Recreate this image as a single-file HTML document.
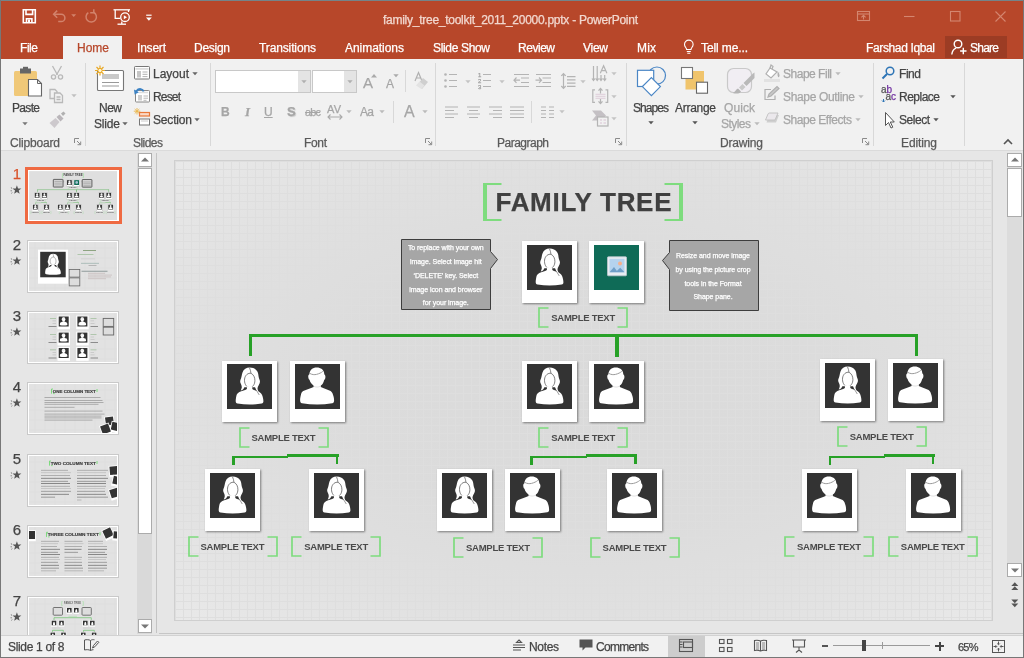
<!DOCTYPE html>
<html lang="en"><head><meta charset="utf-8"><title>family_tree_toolkit_2011_20000.pptx - PowerPoint</title>
<style>
html,body{margin:0;padding:0;}
body{width:1024px;height:658px;overflow:hidden;background:#e6e6e6;font-family:"Liberation Sans",sans-serif;}
#app{will-change:transform;position:relative;width:1024px;height:658px;overflow:hidden;background:#e6e6e6;}
.a{position:absolute;}
.t{-webkit-text-stroke:0.250px currentColor;position:absolute;white-space:nowrap;line-height:20px;height:20px;}
svg{position:absolute;overflow:visible;}
#slide{background-color:#e0e0e0;background-image:linear-gradient(to right,#dedede 1px,transparent 1px),linear-gradient(to bottom,#dedede 1px,transparent 1px),radial-gradient(ellipse farthest-corner at 50% 50%,#dadada 0%,#dcdcdc 42%,#e0e0e0 68%,#e6e6e6 90%,#e9e9e9 100%);background-size:8px 8px,8px 8px,100% 100%;background-position:0 0,0 0,0 0;box-shadow:0 0 0 1px #cfcfcf;}
.fr{width:55px;height:61.500px;background:#fff;box-shadow:0.500px 0.500px 2px rgba(0,0,0,.45);}
.slidebg{background-color:#dfdfdf;background-image:linear-gradient(to right,#d3d3d3 1.500px,transparent 1.500px),linear-gradient(to bottom,#d3d3d3 1.500px,transparent 1.500px);background-size:80px 80px;background-position:40px 30px;}
.th{width:92px;height:53px;box-sizing:border-box;border:1px solid #c9c9c9;background:#fff;}

</style></head>
<body>
<div id="app">
<div class="a" style="left:0;top:0;width:1024px;height:59px;background:#b7472a"></div>
<svg style="left:21px;top:8px" width="140" height="18" viewBox="0 0 140 18">
<g fill="none" stroke="#fff" stroke-width="1.6">
<path d="M2.3 1.8h12v13h-12z"/><path d="M5 1.8v4.6h6.6V1.8"/><path d="M5.5 14.8v-4h5.4v4"/>
</g>
<rect x="7" y="11.5" width="2" height="3" fill="#fff"/>
<g fill="none" stroke="#d2826b" stroke-width="1.5">
<path d="M33 6.2h7.2a3.7 3.7 0 0 1 0 7.4h-3"/><path d="M36.2 2.6L32.6 6.2l3.6 3.6"/>
<path d="M72.5 4.2a5.2 5.2 0 1 1-5.2 0.4"/><path d="M72.8 1.2v3.6h-3.6"/>
</g>
<path d="M50.2 6.2h5l-2.5 2.8z" fill="#d2826b"/>
<g fill="none" stroke="#fff" stroke-width="1.3">
<path d="M92.5 1.8h16.5"/><path d="M94.2 2v8.4h5"/><path d="M107.5 2v2"/>
<circle cx="104" cy="9.2" r="4.3"/><path d="M96.5 16.2h8.5"/><path d="M100.8 13.5v2.6"/>
</g>
<path d="M102.8 7.2l3.2 2l-3.2 2z" fill="#fff"/>
<path d="M125.2 7.2h5.4" stroke="#fff" stroke-width="1.2"/><path d="M125 9.6h5.8l-2.9 3.2z" fill="#fff"/>
</svg>
<span class="t " style="left:383px;top:10px;font-size:12px;color:#f2d8cf;letter-spacing:-0.262px;">family_tree_toolkit_2011_20000.pptx - PowerPoint</span>
<svg style="left:855px;top:8px" width="160" height="18" viewBox="0 0 160 18" fill="none" stroke="#d4866f" stroke-width="1.1">
<rect x="2.5" y="3.5" width="12" height="9"/><path d="M2.5 6h12"/><path d="M8.5 11.5v-4M6.4 9.4l2.1-2.1l2.1 2.1"/>
<path d="M49 8.5h10.5"/>
<rect x="95.500" y="3.500" width="9.500" height="9.500"/>
<path d="M140.500 3.500l10 10M150.500 3.500l-10 10"/>
</svg>
<div class="a" style="left:63px;top:36px;width:59px;height:24px;background:#f1f1f1"></div>
<div class="a" style="left:945px;top:36px;width:62px;height:22px;background:#9c3c24"></div>
<span class="t " style="left:20px;top:38px;font-size:12px;color:#fff;letter-spacing:-0.446px;">File</span>
<span class="t " style="left:137px;top:38px;font-size:12px;color:#fff;letter-spacing:-0.203px;">Insert</span>
<span class="t " style="left:194px;top:38px;font-size:12px;color:#fff;letter-spacing:-0.271px;">Design</span>
<span class="t " style="left:259px;top:38px;font-size:12px;color:#fff;letter-spacing:-0.125px;">Transitions</span>
<span class="t " style="left:345px;top:38px;font-size:12px;color:#fff;letter-spacing:-0.040px;">Animations</span>
<span class="t " style="left:433px;top:38px;font-size:12px;color:#fff;letter-spacing:-0.338px;">Slide Show</span>
<span class="t " style="left:518px;top:38px;font-size:12px;color:#fff;letter-spacing:-0.470px;">Review</span>
<span class="t " style="left:583px;top:38px;font-size:12px;color:#fff;letter-spacing:-0.265px;">View</span>
<span class="t " style="left:637px;top:38px;font-size:12px;color:#fff;letter-spacing:0.169px;">Mix</span>
<span class="t " style="left:701px;top:38px;font-size:12px;color:#fff;letter-spacing:-0.113px;">Tell me...</span>
<span class="t " style="left:866px;top:38px;font-size:12px;color:#fff;letter-spacing:-0.365px;">Farshad Iqbal</span>
<span class="t " style="left:970px;top:38px;font-size:12px;color:#fff;letter-spacing:-0.756px;">Share</span>
<span class="t " style="left:77px;top:38px;font-size:12px;color:#b7472a;letter-spacing:-0.004px;">Home</span>
<svg style="left:682px;top:38px" width="14" height="18" viewBox="0 0 14 18" fill="none" stroke="#fff" stroke-width="1.1">
<path d="M4.600 11.500c0-1.600-2.100-2.600-2.100-5.100a4.300 4.300 0 0 1 8.600 0c0 2.500-2.100 3.500-2.100 5.100z"/><path d="M4.800 13.500h4M5.300 15.300h3"/></svg>
<svg style="left:950px;top:38px" width="20" height="18" viewBox="0 0 20 18" fill="none" stroke="#fff" stroke-width="1.4">
<circle cx="8" cy="6" r="3.800"/><path d="M1.800 16.500c0.400-3.600 2.300-5.600 4.300-6.300"/><path d="M13.300 9.800v6.400M10.100 13h6.400"/></svg>
<div class="a" style="left:0;top:59px;width:1024px;height:91px;background:#f1f1f1"></div>
<div class="a" style="left:0;top:150px;width:1024px;height:1px;background:#dadada"></div>
<div class="a" style="left:85px;top:63px;width:1px;height:83px;background:#d8d8d8"></div>
<div class="a" style="left:210px;top:63px;width:1px;height:83px;background:#d8d8d8"></div>
<div class="a" style="left:435px;top:63px;width:1px;height:83px;background:#d8d8d8"></div>
<div class="a" style="left:626px;top:63px;width:1px;height:83px;background:#d8d8d8"></div>
<div class="a" style="left:873px;top:63px;width:1px;height:83px;background:#d8d8d8"></div>
<div class="a" style="left:964px;top:63px;width:1px;height:83px;background:#d8d8d8"></div>
<span class="t " style="left:10px;top:133px;font-size:12px;color:#5a5a5a;letter-spacing:-0.171px;">Clipboard</span>
<span class="t " style="left:133px;top:133px;font-size:12px;color:#5a5a5a;letter-spacing:-0.537px;">Slides</span>
<span class="t " style="left:304px;top:133px;font-size:12px;color:#5a5a5a;letter-spacing:-0.338px;">Font</span>
<span class="t " style="left:497px;top:133px;font-size:12px;color:#5a5a5a;letter-spacing:-0.505px;">Paragraph</span>
<span class="t " style="left:720px;top:133px;font-size:12px;color:#5a5a5a;letter-spacing:-0.170px;">Drawing</span>
<span class="t " style="left:901px;top:133px;font-size:12px;color:#5a5a5a;letter-spacing:-0.116px;">Editing</span>
<svg style="left:74px;top:138px" width="8" height="8" viewBox="0 0 8 8" fill="none" stroke="#8a8a8a" stroke-width="1"><path d="M0.500 5V0.500H5"/><path d="M3 3l3.500 3.500M6.700 3.500v3.200H3.500"/></svg>
<svg style="left:425px;top:138px" width="8" height="8" viewBox="0 0 8 8" fill="none" stroke="#8a8a8a" stroke-width="1"><path d="M0.500 5V0.500H5"/><path d="M3 3l3.500 3.500M6.700 3.500v3.200H3.500"/></svg>
<svg style="left:615px;top:138px" width="8" height="8" viewBox="0 0 8 8" fill="none" stroke="#8a8a8a" stroke-width="1"><path d="M0.500 5V0.500H5"/><path d="M3 3l3.500 3.500M6.700 3.500v3.200H3.500"/></svg>
<svg style="left:862px;top:138px" width="8" height="8" viewBox="0 0 8 8" fill="none" stroke="#8a8a8a" stroke-width="1"><path d="M0.500 5V0.500H5"/><path d="M3 3l3.500 3.500M6.700 3.500v3.200H3.500"/></svg>
<svg style="left:1003px;top:138px" width="10" height="8" viewBox="0 0 10 8" fill="none" stroke="#555" stroke-width="1.6"><path d="M1 6l4-4l4 4"/></svg>
<svg style="left:12px;top:66px" width="66" height="60" viewBox="0 0 66 60">
<rect x="2" y="5" width="23" height="25" rx="1.500" fill="#f0c878"/>
<rect x="8" y="2.500" width="11" height="5" fill="#666"/><rect x="11" y="0.800" width="5" height="3" fill="#666"/>
<path d="M16.500 13.500h9l4 4v12.500h-13z" fill="#fff" stroke="#666" stroke-width="1.100"/><path d="M25.500 13.500v4h4" fill="none" stroke="#666" stroke-width="1"/>
<g fill="none" stroke="#b9b9b9" stroke-width="1.300">
<path d="M40.500 0l5 9M49.500 0l-5 9"/><circle cx="41.500" cy="11" r="2.100"/><circle cx="48.500" cy="11" r="2.100"/>
<path d="M38 23.500h5l2 2v7h-7z"/><path d="M42.500 27h5.500l2.500 2.500v7h-8z" fill="#f1f1f1"/><path d="M44.500 31h4M44.500 33.500h4"/>
</g>
<g transform="translate(-1 5)"><path d="M38.500 52l6-5l4 4l-5 6z" fill="#cdc9cd"/><path d="M45.500 46l3-2.500l4 4l-3 3z" fill="#b9b5b9"/><path d="M50 42.500l2.500-2l2 2l-2.500 2.500z" fill="#b0b0b0"/></g>
</svg>
<svg style="left:71px;top:94px" width="6" height="4" viewBox="0 0 6 4"><path d="M0.300 0.300h5.400L3 3.200z" fill="#c0c0c0"/></svg>
<span class="t " style="left:12px;top:98px;font-size:12px;color:#444;letter-spacing:-0.672px;">Paste</span>
<svg style="left:22px;top:122px" width="6" height="4" viewBox="0 0 6 4"><path d="M0.300 0.300h5.400L3 3.200z" fill="#777"/></svg>
<svg style="left:94px;top:65px" width="34" height="30" viewBox="0 0 34 30">
<rect x="3.500" y="5.500" width="26" height="20" rx="1" fill="#fff" stroke="#777" stroke-width="1.100"/>
<rect x="8" y="9" width="17" height="5" fill="#c9c9c9"/><path d="M8 17.500h17M8 21h17" stroke="#999" stroke-width="1"/>
<g stroke="#e9a825" stroke-width="1.200"><path d="M6 0.500v10M1 5.500h10M2.500 2l7 7M9.500 2l-7 7"/></g><circle cx="6" cy="5.500" r="2.100" fill="#fff6d8" stroke="#e9a825" stroke-width="1"/>
</svg>
<span class="t " style="left:99px;top:98px;font-size:12px;color:#444;letter-spacing:-0.504px;">New</span>
<span class="t " style="left:94px;top:114px;font-size:12px;color:#444;letter-spacing:-0.171px;">Slide</span>
<svg style="left:122px;top:122px" width="6" height="4" viewBox="0 0 6 4"><path d="M0.300 0.300h5.400L3 3.200z" fill="#666"/></svg>
<svg style="left:134px;top:65px" width="18" height="62" viewBox="0 0 18 62">
<rect x="0.500" y="1.500" width="15" height="12.500" rx="0.800" fill="#fff" stroke="#777" stroke-width="1"/><rect x="1.500" y="3" width="13" height="1.800" fill="#dcdcdc"/><rect x="3" y="6" width="4" height="6.500" fill="#c6c6c6"/><path d="M8.500 7h5M8.500 9.300h5M8.500 11.600h5" stroke="#a8a8a8" stroke-width="0.900"/>
<rect x="1.500" y="25.500" width="14" height="11.500" rx="0.800" fill="#fff" stroke="#888" stroke-width="1"/><rect x="4" y="30" width="4" height="5.500" fill="#cfcfcf"/><path d="M9.500 31h4.500M9.500 33.200h4.500M9.500 35.300h3" stroke="#b0b0b0" stroke-width="0.900"/><path d="M5 27.500h9" stroke="#ddd" stroke-width="1.500"/>
<path d="M9.500 26.500c-0.500-2.500-4.500-3.800-7-0.500" fill="none" stroke="#3b82c4" stroke-width="1.800"/><path d="M0 24.500l0.600 5l4.400-2.200z" fill="#3b82c4"/>
<rect x="5.500" y="47.500" width="10" height="3.500" fill="#fbd9c6" stroke="#e8793a" stroke-width="1.200"/><rect x="5.500" y="54" width="10" height="6" fill="#fff" stroke="#777" stroke-width="1"/><path d="M7 56h7" stroke="#ccc" stroke-width="1"/>
<g stroke="#eab54a" stroke-width="0.900"><path d="M3 43v6.500M-0.200 46.200h6.500M0.700 44l4.600 4.600M5.300 44l-4.600 4.600"/></g>
</svg>
<span class="t " style="left:153px;top:64px;font-size:12px;color:#444;letter-spacing:-0.006px;">Layout</span>
<svg style="left:192px;top:72px" width="6" height="4" viewBox="0 0 6 4"><path d="M0.300 0.300h5.400L3 3.200z" fill="#666"/></svg>
<span class="t " style="left:153px;top:87px;font-size:12px;color:#444;letter-spacing:-0.837px;">Reset</span>
<span class="t " style="left:153px;top:110px;font-size:12px;color:#444;letter-spacing:-0.171px;">Section</span>
<svg style="left:194px;top:118px" width="6" height="4" viewBox="0 0 6 4"><path d="M0.300 0.300h5.400L3 3.200z" fill="#666"/></svg>
<div class="a" style="left:215px;top:70px;width:96px;height:23px;background:#fff;border:1px solid #c8c8c8;box-sizing:border-box"></div>
<div class="a" style="left:298px;top:71px;width:12px;height:21px;background:#e4e4e4"></div>
<div class="a" style="left:312px;top:70px;width:45px;height:23px;background:#fff;border:1px solid #c8c8c8;box-sizing:border-box"></div>
<div class="a" style="left:344px;top:71px;width:12px;height:21px;background:#e4e4e4"></div>
<svg style="left:301px;top:80px" width="6" height="4" viewBox="0 0 6 4"><path d="M0.300 0.300h5.400L3 3.200z" fill="#b0b0b0"/></svg>
<svg style="left:347px;top:80px" width="6" height="4" viewBox="0 0 6 4"><path d="M0.300 0.300h5.400L3 3.200z" fill="#b0b0b0"/></svg>
<span class="t " style="left:363px;top:73px;font-size:15px;color:#a6a6a6;">A</span>
<svg style="left:371px;top:74px" width="6" height="4" viewBox="0 0 6 4"><path d="M0 3.500h6L3 0z" fill="#aaa"/></svg>
<span class="t " style="left:386px;top:74px;font-size:12px;color:#a6a6a6;">A</span>
<svg style="left:393px;top:74px" width="6" height="4" viewBox="0 0 6 4"><path d="M0.300 0.300h5.400L3 3.200z" fill="#aaa"/></svg>
<div class="a" style="left:405px;top:70px;width:1px;height:22px;background:#d8d8d8"></div>
<svg style="left:414px;top:72px" width="16" height="18" viewBox="0 0 16 18"><path d="M1 9L4.500 0.500L8 9M2.300 6h4.400" fill="none" stroke="#b0b0b0" stroke-width="1.200"/><path d="M3 13l6-7l5 4l-6 7z" fill="#cfcfcf"/><path d="M2 13.500l3.500-4l5 4l-3 3.500z" fill="#e3e3e3"/></svg>
<span class="t " style="left:221px;top:102px;font-size:12px;color:#a6a6a6;font-weight:bold;">B</span>
<span class="t " style="left:245px;top:102px;font-size:12px;color:#a6a6a6;font-weight:bold;font-style:italic;font-family:'Liberation Serif',serif;font-size:13px;">I</span>
<span class="t " style="left:264px;top:102px;font-size:12px;color:#a6a6a6;text-decoration:underline;">U</span>
<span class="t " style="left:287px;top:102px;font-size:13px;color:#a6a6a6;font-weight:bold;text-shadow:1px 1px 1px #ccc;">S</span>
<span class="t " style="left:305px;top:102px;font-size:11px;color:#a6a6a6;letter-spacing:-0.868px;text-decoration:line-through;">abc</span>
<span class="t " style="left:327px;top:99px;font-size:11px;color:#a6a6a6;letter-spacing:0.143px;">AV</span>
<svg style="left:327px;top:114px" width="16" height="6" viewBox="0 0 16 6" fill="none" stroke="#aaa" stroke-width="1.100"><path d="M1 3h14M3.500 0.500L1 3l2.500 2.500M12.500 0.500L15 3l-2.500 2.500"/></svg>
<svg style="left:346px;top:110px" width="6" height="4" viewBox="0 0 6 4"><path d="M0.300 0.300h5.400L3 3.200z" fill="#bbb"/></svg>
<span class="t " style="left:360px;top:102px;font-size:12px;color:#a6a6a6;letter-spacing:-0.678px;">Aa</span>
<svg style="left:379px;top:110px" width="6" height="4" viewBox="0 0 6 4"><path d="M0.300 0.300h5.400L3 3.200z" fill="#bbb"/></svg>
<div class="a" style="left:393px;top:101px;width:1px;height:22px;background:#d8d8d8"></div>
<span class="t " style="left:404px;top:102px;font-size:16px;color:#a6a6a6;">A</span>
<svg style="left:422px;top:110px" width="6" height="4" viewBox="0 0 6 4"><path d="M0.300 0.300h5.400L3 3.200z" fill="#bbb"/></svg>
<svg style="left:442px;top:64px" width="180" height="64" viewBox="0 0 180 64" fill="none" stroke="#b4b4b4" stroke-width="1.200">
<g fill="#b4b4b4" stroke="none"><circle cx="3.500" cy="10.500" r="1.300"/><circle cx="3.500" cy="16.500" r="1.300"/><circle cx="3.500" cy="22.500" r="1.300"/></g>
<path d="M7 10.500h8M7 16.500h8M7 22.500h8"/>
<path d="M41 10.500h8M41 16.500h8M41 22.500h8"/>
<path d="M72 10.500h15M79 14h8M79 18.500h8M72 22.500h15M72 16.200h6M74.500 13.500l-2.500 2.700l2.500 2.700"/>
<path d="M94 10.500h15M100.500 14h8.500M100.500 18.500h8.500M94 22.500h15M93.500 16.200h6M97 13.500l2.500 2.700l-2.500 2.700"/>
<path d="M125 12.700h8.500M125 15.900h8.500M125 19.100h8.500M125 22.300h8.500M121.500 9.500v14.800M119.300 11.800l2.200-2.300l2.200 2.300M119.300 22l2.200 2.300l2.200-2.300"/>
<path d="M3 43h13M3 46.500h9M3 50h13M3 53.500h9"/>
<path d="M25 43h13M27 46.500h9M25 50h13M27 53.500h9"/>
<path d="M47 43h13M51 46.500h9M47 50h13M51 53.500h9"/>
<path d="M68 43h14M68 46.500h14M68 50h14M68 53.500h14"/>
<path d="M99 43h5M107 43h5M99 46.500h5M107 46.500h5M99 50h5M107 50h5M99 53.500h5M107 53.500h5"/>
<path d="M151.500 2v14.500M155.200 2v14.500M159 11v5.500M162.700 11v5.500M150 14.500l1.500 2l1.500-2M153.700 14.500l1.500 2l1.500-2M157.500 14.500l1.500 2l1.500-2M161.200 14.500l1.500 2l1.500-2"/>
<path d="M158.300 9.300l3.300-7.600l3.300 7.600M159.500 6.600h4.200"/>
<path d="M153 25.800h-2.200v12.600h2.200M163.500 25.800h2.200v12.600h-2.200"/><path d="M153.500 30.300h10M153.500 32.300h10M153.500 34.300h10" stroke="#d9c3d3" stroke-width="0.800"/><path d="M158.500 24.500v5M158.500 35v4.500M156.500 26.700l2-2.200l2 2.200M156.500 37.300l2 2.200l2-2.200"/>
<path d="M150 46.500h9l5 5l-5 5h-9l4-5z" fill="#c4c0c4" stroke="none"/>
<rect x="155.500" y="53" width="10.500" height="9" fill="#f1f1f1"/>
<path d="M158 56h2M161.500 56h2.500M158 59h2M161.500 59h2.500" stroke="#d9c3d3"/>
</svg>
<span class="t " style="left:478px;top:64.5px;font-size:6px;color:#a0a0a0;">1</span>
<span class="t " style="left:478px;top:70.5px;font-size:6px;color:#a0a0a0;">2</span>
<span class="t " style="left:478px;top:76.5px;font-size:6px;color:#a0a0a0;">3</span>
<svg style="left:465px;top:80px" width="6" height="4" viewBox="0 0 6 4"><path d="M0.300 0.300h5.400L3 3.200z" fill="#c4c4c4"/></svg>
<svg style="left:499px;top:80px" width="6" height="4" viewBox="0 0 6 4"><path d="M0.300 0.300h5.400L3 3.200z" fill="#c4c4c4"/></svg>
<svg style="left:580px;top:80px" width="6" height="4" viewBox="0 0 6 4"><path d="M0.300 0.300h5.400L3 3.200z" fill="#c4c4c4"/></svg>
<svg style="left:559px;top:110px" width="6" height="4" viewBox="0 0 6 4"><path d="M0.300 0.300h5.400L3 3.200z" fill="#c4c4c4"/></svg>
<svg style="left:611px;top:72px" width="6" height="4" viewBox="0 0 6 4"><path d="M0.300 0.300h5.400L3 3.200z" fill="#c4c4c4"/></svg>
<svg style="left:611px;top:95px" width="6" height="4" viewBox="0 0 6 4"><path d="M0.300 0.300h5.400L3 3.200z" fill="#c4c4c4"/></svg>
<svg style="left:611px;top:117px" width="6" height="4" viewBox="0 0 6 4"><path d="M0.300 0.300h5.400L3 3.200z" fill="#c4c4c4"/></svg>
<div class="a" style="left:531px;top:101px;width:1px;height:22px;background:#d8d8d8"></div>
<svg style="left:634px;top:64px" width="36" height="36" viewBox="0 0 36 36" fill="#fff" stroke="#4a86c5" stroke-width="1.200">
<circle cx="22.900" cy="11.600" r="8.600" fill="none"/><rect x="3.500" y="6.300" width="16.200" height="16.200"/><path d="M17.400 13.600l9 9l-9 9l-9-9z"/></svg>
<span class="t " style="left:633px;top:98px;font-size:12px;color:#444;letter-spacing:-0.940px;">Shapes</span>
<svg style="left:648px;top:121px" width="6" height="4" viewBox="0 0 6 4"><path d="M0.300 0.300h5.400L3 3.200z" fill="#555"/></svg>
<svg style="left:679px;top:66px" width="32" height="32" viewBox="0 0 32 32">
<rect x="6.500" y="5" width="18.500" height="18.500" fill="#f0c46c"/><rect x="2.500" y="1.500" width="11" height="11" fill="#fff" stroke="#777" stroke-width="1.100"/><rect x="17.500" y="16.200" width="11" height="11" fill="#fff" stroke="#666" stroke-width="1.100"/></svg>
<span class="t " style="left:675px;top:98px;font-size:12px;color:#444;letter-spacing:-0.282px;">Arrange</span>
<svg style="left:692px;top:121px" width="6" height="4" viewBox="0 0 6 4"><path d="M0.300 0.300h5.400L3 3.200z" fill="#555"/></svg>
<svg style="left:725px;top:66px" width="34" height="32" viewBox="0 0 34 32">
<rect x="2.500" y="2.500" width="24" height="24" rx="6" fill="#f1eef3" stroke="#c9c9c9" stroke-width="1.200"/>
<path d="M7.500 27c2.500-0.500 3-3.500 5.500-4.500l3 3c-1.500 2.500-5 2.500-8.500 1.500z" fill="#b4b4b4"/><path d="M14 21.500l3.500-3.500l3 3l-3.500 3.500z" fill="#c9c9c9"/><path d="M18.500 17l9.500-9.500l1.500-1v5.500l-8 8z" fill="#b9b9b9"/></svg>
<span class="t " style="left:724px;top:98px;font-size:12px;color:#a6a6a6;letter-spacing:0.081px;">Quick</span>
<span class="t " style="left:721px;top:114px;font-size:12px;color:#a6a6a6;letter-spacing:-0.536px;">Styles</span>
<svg style="left:754px;top:122px" width="6" height="4" viewBox="0 0 6 4"><path d="M0.300 0.300h5.400L3 3.200z" fill="#bbb"/></svg>
<svg style="left:764px;top:64px" width="18" height="64" viewBox="0 0 18 64" fill="none" stroke="#b0b0b0" stroke-width="1.200">
<path d="M6 4l-4 6l5 4l6-6z" fill="#fff"/><path d="M6 4l1-3l2 1.500l-1 2.500"/><path d="M14 9c1 1.500 1.500 2.500 0.500 3.500c-1-1-0.500-2 0-3.500z" fill="#b0b0b0"/><rect x="0" y="15" width="16" height="3" fill="#e2e2e2" stroke="none"/>
<path d="M7 25.500H1v10h10v-4"/><path d="M4 33l1-3l8-7.500l2 2l-8 7.500z" fill="#c8c8c8"/>
<path d="M2.500 58.500l2.500-6.500q0.500-1 1.500-1h8.500l-3 7.500z" fill="#cfcfcf" stroke="none"/><path d="M1.500 56l2.500-6q0.500-1 1.500-1h8.500l-3 7z" fill="#ebe8ec" stroke="#c0c0c0" stroke-width="0.900"/>
</svg>
<span class="t " style="left:783px;top:64px;font-size:12px;color:#a6a6a6;letter-spacing:-0.485px;">Shape Fill</span>
<svg style="left:835px;top:72px" width="6" height="4" viewBox="0 0 6 4"><path d="M0.300 0.300h5.400L3 3.200z" fill="#bbb"/></svg>
<span class="t " style="left:783px;top:87px;font-size:12px;color:#a6a6a6;letter-spacing:-0.338px;">Shape Outline</span>
<svg style="left:858px;top:95px" width="6" height="4" viewBox="0 0 6 4"><path d="M0.300 0.300h5.400L3 3.200z" fill="#bbb"/></svg>
<span class="t " style="left:783px;top:110px;font-size:12px;color:#a6a6a6;letter-spacing:-0.458px;">Shape Effects</span>
<svg style="left:855px;top:118px" width="6" height="4" viewBox="0 0 6 4"><path d="M0.300 0.300h5.400L3 3.200z" fill="#bbb"/></svg>
<svg style="left:880px;top:65px" width="18" height="64" viewBox="0 0 18 64" fill="none">
<circle cx="10" cy="6" r="3.800" stroke="#2e75b6" stroke-width="1.500"/><path d="M7 9l-4.500 4.500" stroke="#2e75b6" stroke-width="2"/>
<path d="M5.500 47.500v13l3-3l2.500 5.500l1.800-0.800l-2.500-5.200h4z" fill="#fff" stroke="#555" stroke-width="1"/>
<path d="M2 35.500l1.500 1.500l1.500-1.500M3.500 37v-3" stroke="#2e75b6" stroke-width="1"/>
</svg>
<span class="t" style="left:885.500px;top:92px;font-size:10px;line-height:10px;height:10px;color:#555">a<span style="color:#7030a0">c</span></span>
<span class="t" style="left:881px;top:85px;font-size:10px;line-height:10px;height:10px;color:#555">a<span style="color:#7030a0">b</span></span>
<span class="t " style="left:899px;top:64px;font-size:12px;color:#444;letter-spacing:-0.448px;">Find</span>
<span class="t " style="left:899px;top:87px;font-size:12px;color:#444;letter-spacing:-0.505px;">Replace</span>
<svg style="left:950px;top:95px" width="6" height="4" viewBox="0 0 6 4"><path d="M0.300 0.300h5.400L3 3.200z" fill="#555"/></svg>
<span class="t " style="left:899px;top:110px;font-size:12px;color:#444;letter-spacing:-0.471px;">Select</span>
<svg style="left:933px;top:118px" width="6" height="4" viewBox="0 0 6 4"><path d="M0.300 0.300h5.400L3 3.200z" fill="#555"/></svg>
<div class="a" style="left:159px;top:633px;width:864px;height:1px;background:#c6c6c6"></div>
<div class="a" style="left:0;top:635px;width:1024px;height:1px;background:#d2d2d2"></div>
<div class="a" style="left:0;top:636px;width:1024px;height:22px;background:#f1f1f1"></div>
<span class="t " style="left:8px;top:637px;font-size:12px;color:#444;letter-spacing:-0.322px;">Slide 1 of 8</span>
<svg style="left:83px;top:638px" width="16" height="16" viewBox="0 0 16 16" fill="none" stroke="#555" stroke-width="1"><path d="M7.500 2.500C6 1.500 3.500 1.500 1.500 2v10c2-0.500 4.500-0.500 6 0.500z"/><path d="M7.500 2.500C9 1.500 10 1.500 11.500 1.800M7.500 12.500c1-0.600 2-0.800 3-0.800"/><path d="M9.500 10l1-2.500l4-4.500l1.300 1.300l-4 4.500z" fill="#f1f1f1"/></svg>
<svg style="left:512px;top:639px" width="14" height="14" viewBox="0 0 14 14" fill="none" stroke="#555" stroke-width="1.100"><path d="M7 1l2.500 2.500h-5zM1 6h12M1 8.500h12M1 11h8"/></svg>
<span class="t " style="left:529px;top:637px;font-size:12px;color:#444;letter-spacing:-0.337px;">Notes</span>
<svg style="left:579px;top:639px" width="14" height="13" viewBox="0 0 14 13"><path d="M0.500 0.500h13v8h-7l-3 3v-3h-3z" fill="#555"/></svg>
<span class="t " style="left:596px;top:637px;font-size:12px;color:#444;letter-spacing:-0.717px;">Comments</span>
<div class="a" style="left:668px;top:636px;width:37px;height:22px;background:#cdcdcd"></div>
<svg style="left:678px;top:638px" width="130" height="16" viewBox="0 0 130 16" fill="none" stroke="#555" stroke-width="1.100">
<rect x="1.500" y="1.500" width="13" height="12"/><rect x="5.500" y="4" width="9" height="5.500"/><path d="M1.500 4h3M1.500 6.500h3M1.500 9h3"/>
<rect x="41.500" y="1.500" width="4.500" height="4"/><rect x="49.500" y="1.500" width="4.500" height="4"/><rect x="41.500" y="9.500" width="4.500" height="4"/><rect x="49.500" y="9.500" width="4.500" height="4"/>
<path d="M82.500 3v10.500M82.500 3c-2-1-4-1-6-0.500v10c2-0.500 4-0.500 6 0.500M82.500 3c2-1 4-1 6-0.500v10c-2-0.500-4-0.500-6 0.500"/><path d="M78 5h3M78 7h3M78 9h3M78 11h3M84 5h3M84 7h3M84 9h3M84 11h3" stroke-width="0.700"/>
<path d="M114 2h14M115.500 2.500v6.500h11V2.500M121 9v3.500M118 14.500l3-2.500l3 2.500"/>
</svg>
<div class="a" style="left:822px;top:645px;width:6px;height:2px;background:#555"></div>
<div class="a" style="left:833px;top:645px;width:97px;height:1px;background:#9a9a9a"></div>
<div class="a" style="left:882px;top:642px;width:1px;height:7px;background:#9a9a9a"></div>
<div class="a" style="left:862px;top:640px;width:4px;height:11px;background:#444"></div>
<div class="a" style="left:935px;top:645px;width:9px;height:2px;background:#444"></div><div class="a" style="left:938.500px;top:641.500px;width:2px;height:9px;background:#444"></div>
<span class="t " style="left:958px;top:637px;font-size:11px;color:#444;letter-spacing:-0.758px;">65%</span>
<svg style="left:992px;top:640px" width="14" height="14" viewBox="0 0 14 14" fill="none" stroke="#555" stroke-width="1"><rect x="0.500" y="0.500" width="12" height="12"/><path d="M6.500 1.500v3M6.500 8.500v3M1.500 6.500h3M8.500 6.500h3M5.200 3.500l1.300 1.300l1.300-1.300M5.200 9.500l1.300-1.300l1.300 1.300M3.500 5.200l1.300 1.300l-1.300 1.300M9.500 5.200l-1.300 1.300l1.300 1.300"/></svg>
<div class="a" style="left:137px;top:153px;width:15px;height:481px;background:#d9d9d9"></div>
<div class="a" style="left:138px;top:153px;width:14px;height:14px;background:#fff;border:1px solid #ababab;box-sizing:border-box"></div>
<svg style="left:141px;top:157px" width="8" height="5" viewBox="0 0 8 5"><path d="M0 4.500h8L4 0.500z" fill="#777"/></svg>
<div class="a" style="left:138px;top:168px;width:14px;height:366px;background:#fff;border:1px solid #ababab;box-sizing:border-box"></div>
<div class="a" style="left:138px;top:619px;width:14px;height:14px;background:#fff;border:1px solid #ababab;box-sizing:border-box"></div>
<svg style="left:141px;top:624px" width="8" height="5" viewBox="0 0 8 5"><path d="M0 0.500h8L4 4.500z" fill="#777"/></svg>
<div class="a" style="left:156px;top:153px;width:1px;height:480px;background:#c4c4c4"></div>
<div class="a" style="left:1007px;top:153px;width:15px;height:424px;background:#dcdcdc"></div>
<div class="a" style="left:1007px;top:153px;width:15px;height:14px;background:#fff;border:1px solid #ababab;box-sizing:border-box"></div>
<svg style="left:1010.500px;top:157px" width="8" height="5" viewBox="0 0 8 5"><path d="M0 4.500h8L4 0.500z" fill="#777"/></svg>
<div class="a" style="left:1007px;top:168px;width:15px;height:49px;background:#fff;border:1px solid #ababab;box-sizing:border-box"></div>
<div class="a" style="left:1007px;top:563px;width:15px;height:14px;background:#fff;border:1px solid #ababab;box-sizing:border-box"></div>
<svg style="left:1010.500px;top:568px" width="8" height="5" viewBox="0 0 8 5"><path d="M0 0.500h8L4 4.500z" fill="#777"/></svg>
<svg style="left:1010px;top:581px" width="10" height="30" viewBox="0 0 10 30" fill="#555"><path d="M1.300 5h7L4.800 1.200zM1.300 9h7L4.800 5.200z"/><path d="M1.300 18.500h7L4.800 22.300zM1.300 22.500h7L4.800 26.300z"/></svg>
<div class="a" style="left:0;top:0;width:1024px;height:1px;background:#748489"></div>
<div class="a" style="left:0;top:0;width:1px;height:658px;background:#777"></div>
<div class="a" style="left:1022.500px;top:0;width:1.500px;height:658px;background:#777"></div>
<div class="a" style="left:0;top:657px;width:1024px;height:1px;background:#777"></div>
<div class="a" id="slide" style="left:175px;top:161px;width:817px;height:459px;"></div>
<svg style="left:483px;top:183px" width="200" height="38" viewBox="0 0 200 38" fill="none" stroke="#7edc7e"><path d="M2 0v38" stroke-width="4"/><path d="M0 1h18.500M0 37h18.500" stroke-width="2"/><path d="M198 0v38" stroke-width="4"/><path d="M200 1h-18.500M200 37h-18.500" stroke-width="2"/></svg>
<span class="t" style="left:495.5px;top:182px;line-height:40px;height:40px;font-size:26px;font-weight:bold;color:#404040;letter-spacing:0.696px">FAMILY TREE</span>
<svg style="left:400px;top:238px" width="100" height="74" viewBox="0 0 100 74"><path d="M1.500 1.500H90.500V13.500L97.500 21.500L90.500 30.500V71.500H1.500z" fill="#a6a6a6" stroke="#3d3d3d" stroke-width="1"/></svg>
<svg style="left:660.500px;top:239px" width="100" height="74" viewBox="0 0 100 74"><path d="M97.500 1.500H8.500V13.500L1.500 21.500L8.500 30.500V71.500H97.500z" fill="#a6a6a6" stroke="#3d3d3d" stroke-width="1"/></svg>
<span class="t" style="left:385.8px;top:237.7px;width:120px;text-align:center;font-size:7px;color:#fff;letter-spacing:-0.050px">To replace with your own</span>
<span class="t" style="left:385.8px;top:252px;width:120px;text-align:center;font-size:7px;color:#fff;letter-spacing:-0.050px">image. Select image hit</span>
<span class="t" style="left:385.8px;top:266px;width:120px;text-align:center;font-size:7px;color:#fff;letter-spacing:-0.052px">‘DELETE’ key. Select</span>
<span class="t" style="left:385.8px;top:279.6px;width:120px;text-align:center;font-size:7px;color:#fff;letter-spacing:-0.053px">image icon and browser</span>
<span class="t" style="left:385.8px;top:293px;width:120px;text-align:center;font-size:7px;color:#fff;letter-spacing:-0.050px">for your image.</span>
<span class="t" style="left:653px;top:245.6px;width:120px;text-align:center;font-size:7px;color:#fff;letter-spacing:-0.056px">Resize and move image</span>
<span class="t" style="left:653px;top:259.8px;width:120px;text-align:center;font-size:7px;color:#fff;letter-spacing:-0.048px">by using the picture crop</span>
<span class="t" style="left:653px;top:273.6px;width:120px;text-align:center;font-size:7px;color:#fff;letter-spacing:-0.048px">tools in the Format</span>
<span class="t" style="left:653px;top:287.2px;width:120px;text-align:center;font-size:7px;color:#fff;letter-spacing:-0.060px">Shape pane.</span>
<div class="a" style="left:249px;top:334px;width:669px;height:3px;background:#27a127"></div>
<div class="a" style="left:249px;top:334px;width:3px;height:22px;background:#27a127"></div>
<div class="a" style="left:615px;top:334px;width:3.5px;height:23px;background:#27a127"></div>
<div class="a" style="left:914.5px;top:334px;width:3.5px;height:21.5px;background:#27a127"></div>
<div class="a" style="left:232px;top:455.5px;width:56px;height:2.6px;background:#27a127"></div>
<div class="a" style="left:287px;top:454px;width:51.5px;height:2.6px;background:#27a127"></div>
<div class="a" style="left:232px;top:455.5px;width:2.8px;height:9.0px;background:#27a127"></div>
<div class="a" style="left:335.5px;top:454px;width:2.8px;height:9.5px;background:#27a127"></div>
<div class="a" style="left:530px;top:455.5px;width:56.5px;height:2.6px;background:#27a127"></div>
<div class="a" style="left:585.5px;top:454px;width:51.5px;height:2.6px;background:#27a127"></div>
<div class="a" style="left:530px;top:455.5px;width:2.8px;height:9.0px;background:#27a127"></div>
<div class="a" style="left:634px;top:454px;width:2.8px;height:9.5px;background:#27a127"></div>
<div class="a" style="left:828.5px;top:455.5px;width:56.0px;height:2.6px;background:#27a127"></div>
<div class="a" style="left:883.5px;top:454px;width:51.200000000000045px;height:2.6px;background:#27a127"></div>
<div class="a" style="left:828.5px;top:455.5px;width:2.8px;height:9.0px;background:#27a127"></div>
<div class="a" style="left:931.7px;top:454px;width:2.8px;height:9.5px;background:#27a127"></div>
<div class="a fr" style="left:522px;top:241.0px"></div>
<svg style="left:527px;top:244.5px" width="45" height="45" viewBox="0 0 45 45"><rect width="45" height="45" fill="#333"/><path d="M22.600 3.600C19.500 3.600 16.500 5.500 15.500 8.500C14.600 11 14.800 12.500 14 14.500C13.200 16.200 12.900 17.500 13.500 19C14.200 20.700 15 22 14.700 23.800C14.500 25 14 25.800 13.700 26.500C15 26.300 16.400 25.400 17.400 23.200L28 23.200C28.800 24.800 29.500 26.800 30.200 28C31 29.500 31.800 30.400 32.900 30.800C32.600 29 31 27 30.600 25.200C30.300 23.800 31 22.500 31.800 21C32.800 19.300 33.200 18 32.800 16.500C32.300 14.800 31.600 13.500 31.500 12C31.300 9.800 31 8.500 30 7C28.500 4.800 26 3.600 22.600 3.600Z" fill="#fff"/>
<path d="M23.200 9.200C19.700 9.400 17.400 12.500 17.500 16.500C17.600 20.500 19.800 23.500 22.700 23.500C25.600 23.500 27.900 20.500 27.900 16.500C27.900 13.400 26.600 10.700 24.300 9.500Z" fill="#fff" stroke="#3a3a3a" stroke-width="0.650"/>
<path d="M22.500 3.800C23.300 5.500 23.700 7.500 24 9.400" fill="none" stroke="#3a3a3a" stroke-width="0.600"/>
<path d="M19.900 22.300V25C18.500 26 16.500 26.600 14.200 27.200C11.500 28 10 29.500 9.600 31C9 33.500 8.700 35.500 8.700 37C8.700 38.500 9.200 39.300 10.500 39.600C18.500 40.900 26.700 40.900 34.700 39.600C36 39.300 36.500 38.500 36.400 37C36.300 35 35.800 32.500 34.800 30.600C34 29.200 32.800 28.200 31.300 27.500C29 26.600 26.500 26 25.300 25V22.300Z" fill="#fff"/>
<path d="M29.300 26.200L32.300 31" fill="none" stroke="#555" stroke-width="0.600"/></svg>
<div class="a fr" style="left:589px;top:241.0px"></div>
<svg style="left:594px;top:244.5px" width="45" height="45" viewBox="0 0 45 45"><rect width="45" height="45" fill="#0f6b57"/><rect x="13.500" y="11.800" width="19" height="19" rx="0.800" fill="#e8edf2" stroke="#bfc7cf" stroke-width="0.800"/><rect x="15.500" y="13.800" width="15" height="13.500" fill="#b5d3ee"/><circle cx="26" cy="18.600" r="2" fill="#f7b08c"/><path d="M15.500 27.300l4.500-5.300l3.800 5.300zM21.500 27.300l4.700-4.500l4.300 4.500z" fill="#6f9fc8"/></svg>
<div class="a fr" style="left:221.5px;top:360.5px"></div>
<svg style="left:226.5px;top:364px" width="45" height="45" viewBox="0 0 45 45"><rect width="45" height="45" fill="#333"/><path d="M22.600 3.600C19.500 3.600 16.500 5.500 15.500 8.500C14.600 11 14.800 12.500 14 14.500C13.200 16.200 12.900 17.500 13.500 19C14.200 20.700 15 22 14.700 23.800C14.500 25 14 25.800 13.700 26.500C15 26.300 16.400 25.400 17.400 23.200L28 23.200C28.800 24.800 29.500 26.800 30.200 28C31 29.500 31.800 30.400 32.900 30.800C32.600 29 31 27 30.600 25.200C30.300 23.800 31 22.500 31.800 21C32.800 19.300 33.200 18 32.800 16.500C32.300 14.800 31.600 13.500 31.500 12C31.300 9.800 31 8.500 30 7C28.500 4.800 26 3.600 22.600 3.600Z" fill="#fff"/>
<path d="M23.200 9.200C19.700 9.400 17.400 12.500 17.500 16.500C17.600 20.500 19.800 23.500 22.700 23.500C25.600 23.500 27.900 20.500 27.900 16.500C27.900 13.400 26.600 10.700 24.300 9.500Z" fill="#fff" stroke="#3a3a3a" stroke-width="0.650"/>
<path d="M22.500 3.800C23.300 5.500 23.700 7.500 24 9.400" fill="none" stroke="#3a3a3a" stroke-width="0.600"/>
<path d="M19.900 22.300V25C18.500 26 16.500 26.600 14.200 27.200C11.500 28 10 29.500 9.600 31C9 33.500 8.700 35.500 8.700 37C8.700 38.500 9.200 39.300 10.500 39.600C18.500 40.900 26.700 40.900 34.700 39.600C36 39.300 36.500 38.500 36.400 37C36.300 35 35.800 32.500 34.800 30.600C34 29.200 32.800 28.200 31.300 27.500C29 26.600 26.500 26 25.300 25V22.300Z" fill="#fff"/>
<path d="M29.300 26.200L32.300 31" fill="none" stroke="#555" stroke-width="0.600"/></svg>
<div class="a fr" style="left:290px;top:360.5px"></div>
<svg style="left:295px;top:364px" width="45" height="45" viewBox="0 0 45 45"><rect width="45" height="45" fill="#333"/><path d="M21.700 3.600C17.600 3.600 14.600 6.200 14.400 10.200C13.500 10.600 13.100 11.800 13.300 13.200C13.500 14.600 13.900 15.400 14.500 15.800C15.200 18.600 17 20.600 18.600 21.600C20.600 22.800 23.800 22.800 25.800 21.600C27.400 20.600 28.600 18.600 29.200 16C29.900 15.500 30.300 14.700 30.400 13.300C30.500 11.900 30.100 10.700 29.200 10.300L29.200 9.300C28.800 6 26 3.600 21.700 3.600Z" fill="#fff"/>
<path d="M15 9.500C17 10.700 19.400 10.900 21.500 10.400C24.200 9.700 26.300 8.700 27.800 7.400" fill="none" stroke="#9a9a9a" stroke-width="1"/>
<path d="M18.600 21V23C15.500 24.600 11.500 25.700 8.200 27C6.800 27.800 6.300 29 6 30.500C5.500 32.500 5.100 34.500 5.100 36C5.100 38 5.600 39 7 39.300C17 40.900 27.500 40.900 37.200 39.300C38.600 39 39.200 38 39.100 36C39 34 38.500 32 37.900 30.500C37.400 28.800 36.800 27.800 35.600 27C32.500 25.700 28.800 24.600 25.800 23V21Z" fill="#fff"/>
<path d="M19 22.300C20.800 23.300 23.600 23.300 25.400 22.300" fill="none" stroke="#c4c4c4" stroke-width="0.500"/></svg>
<div class="a fr" style="left:522px;top:360.5px"></div>
<svg style="left:527px;top:364px" width="45" height="45" viewBox="0 0 45 45"><rect width="45" height="45" fill="#333"/><path d="M22.600 3.600C19.500 3.600 16.500 5.500 15.500 8.500C14.600 11 14.800 12.500 14 14.500C13.200 16.200 12.900 17.500 13.500 19C14.200 20.700 15 22 14.700 23.800C14.500 25 14 25.800 13.700 26.500C15 26.300 16.400 25.400 17.400 23.200L28 23.200C28.800 24.800 29.500 26.800 30.200 28C31 29.500 31.800 30.400 32.900 30.800C32.600 29 31 27 30.600 25.200C30.300 23.800 31 22.500 31.800 21C32.800 19.300 33.200 18 32.800 16.500C32.300 14.800 31.600 13.500 31.500 12C31.300 9.800 31 8.500 30 7C28.500 4.800 26 3.600 22.600 3.600Z" fill="#fff"/>
<path d="M23.200 9.200C19.700 9.400 17.400 12.500 17.500 16.500C17.600 20.500 19.800 23.500 22.700 23.500C25.600 23.500 27.900 20.500 27.900 16.500C27.900 13.400 26.600 10.700 24.300 9.500Z" fill="#fff" stroke="#3a3a3a" stroke-width="0.650"/>
<path d="M22.500 3.800C23.300 5.500 23.700 7.500 24 9.400" fill="none" stroke="#3a3a3a" stroke-width="0.600"/>
<path d="M19.900 22.300V25C18.500 26 16.500 26.600 14.200 27.200C11.500 28 10 29.500 9.600 31C9 33.500 8.700 35.500 8.700 37C8.700 38.500 9.200 39.300 10.500 39.600C18.500 40.900 26.700 40.900 34.700 39.600C36 39.300 36.500 38.500 36.400 37C36.300 35 35.800 32.500 34.800 30.600C34 29.200 32.800 28.200 31.300 27.500C29 26.600 26.500 26 25.300 25V22.300Z" fill="#fff"/>
<path d="M29.300 26.200L32.300 31" fill="none" stroke="#555" stroke-width="0.600"/></svg>
<div class="a fr" style="left:589px;top:360.5px"></div>
<svg style="left:594px;top:364px" width="45" height="45" viewBox="0 0 45 45"><rect width="45" height="45" fill="#333"/><path d="M21.700 3.600C17.600 3.600 14.600 6.200 14.400 10.200C13.500 10.600 13.100 11.800 13.300 13.200C13.500 14.600 13.900 15.400 14.500 15.800C15.200 18.600 17 20.600 18.600 21.600C20.600 22.800 23.800 22.800 25.800 21.600C27.400 20.600 28.600 18.600 29.200 16C29.900 15.500 30.300 14.700 30.400 13.300C30.500 11.900 30.100 10.700 29.200 10.300L29.200 9.300C28.800 6 26 3.600 21.700 3.600Z" fill="#fff"/>
<path d="M15 9.500C17 10.700 19.400 10.900 21.500 10.400C24.200 9.700 26.300 8.700 27.800 7.400" fill="none" stroke="#9a9a9a" stroke-width="1"/>
<path d="M18.600 21V23C15.500 24.600 11.500 25.700 8.200 27C6.800 27.800 6.300 29 6 30.500C5.500 32.500 5.100 34.500 5.100 36C5.100 38 5.600 39 7 39.300C17 40.900 27.500 40.900 37.200 39.300C38.600 39 39.200 38 39.100 36C39 34 38.500 32 37.900 30.500C37.400 28.800 36.800 27.800 35.600 27C32.500 25.700 28.800 24.600 25.800 23V21Z" fill="#fff"/>
<path d="M19 22.300C20.800 23.300 23.600 23.300 25.400 22.300" fill="none" stroke="#c4c4c4" stroke-width="0.500"/></svg>
<div class="a fr" style="left:820.2px;top:359.2px"></div>
<svg style="left:825.2px;top:362.7px" width="45" height="45" viewBox="0 0 45 45"><rect width="45" height="45" fill="#333"/><path d="M22.600 3.600C19.500 3.600 16.500 5.500 15.500 8.500C14.600 11 14.800 12.500 14 14.500C13.200 16.200 12.900 17.500 13.500 19C14.200 20.700 15 22 14.700 23.800C14.500 25 14 25.800 13.700 26.500C15 26.300 16.400 25.400 17.400 23.200L28 23.200C28.800 24.800 29.500 26.800 30.200 28C31 29.500 31.800 30.400 32.900 30.800C32.600 29 31 27 30.600 25.200C30.300 23.800 31 22.500 31.800 21C32.800 19.300 33.200 18 32.800 16.500C32.300 14.800 31.600 13.500 31.500 12C31.300 9.800 31 8.500 30 7C28.500 4.800 26 3.600 22.600 3.600Z" fill="#fff"/>
<path d="M23.200 9.200C19.700 9.400 17.400 12.500 17.500 16.500C17.600 20.500 19.800 23.500 22.700 23.500C25.600 23.500 27.900 20.500 27.900 16.500C27.900 13.400 26.600 10.700 24.300 9.500Z" fill="#fff" stroke="#3a3a3a" stroke-width="0.650"/>
<path d="M22.500 3.800C23.300 5.500 23.700 7.500 24 9.400" fill="none" stroke="#3a3a3a" stroke-width="0.600"/>
<path d="M19.900 22.300V25C18.500 26 16.500 26.600 14.200 27.200C11.500 28 10 29.500 9.600 31C9 33.500 8.700 35.500 8.700 37C8.700 38.500 9.200 39.300 10.500 39.600C18.500 40.900 26.700 40.900 34.700 39.600C36 39.300 36.500 38.500 36.400 37C36.300 35 35.800 32.500 34.800 30.600C34 29.200 32.800 28.200 31.300 27.500C29 26.600 26.500 26 25.300 25V22.300Z" fill="#fff"/>
<path d="M29.300 26.200L32.300 31" fill="none" stroke="#555" stroke-width="0.600"/></svg>
<div class="a fr" style="left:888.2px;top:359.2px"></div>
<svg style="left:893.2px;top:362.7px" width="45" height="45" viewBox="0 0 45 45"><rect width="45" height="45" fill="#333"/><path d="M21.700 3.600C17.600 3.600 14.600 6.200 14.400 10.200C13.500 10.600 13.100 11.800 13.300 13.200C13.500 14.600 13.900 15.400 14.500 15.800C15.200 18.600 17 20.600 18.600 21.600C20.600 22.800 23.800 22.800 25.800 21.600C27.400 20.600 28.600 18.600 29.200 16C29.900 15.500 30.300 14.700 30.400 13.300C30.500 11.900 30.100 10.700 29.200 10.300L29.200 9.300C28.800 6 26 3.600 21.700 3.600Z" fill="#fff"/>
<path d="M15 9.500C17 10.700 19.400 10.900 21.500 10.400C24.200 9.700 26.300 8.700 27.800 7.400" fill="none" stroke="#9a9a9a" stroke-width="1"/>
<path d="M18.600 21V23C15.500 24.600 11.500 25.700 8.200 27C6.800 27.800 6.300 29 6 30.500C5.500 32.500 5.100 34.500 5.100 36C5.100 38 5.600 39 7 39.300C17 40.900 27.500 40.900 37.200 39.300C38.600 39 39.200 38 39.100 36C39 34 38.500 32 37.900 30.500C37.400 28.800 36.800 27.800 35.600 27C32.500 25.700 28.800 24.600 25.800 23V21Z" fill="#fff"/>
<path d="M19 22.300C20.800 23.300 23.600 23.300 25.400 22.300" fill="none" stroke="#c4c4c4" stroke-width="0.500"/></svg>
<div class="a fr" style="left:205px;top:469.0px"></div>
<svg style="left:210px;top:472.5px" width="45" height="45" viewBox="0 0 45 45"><rect width="45" height="45" fill="#333"/><path d="M22.600 3.600C19.500 3.600 16.500 5.500 15.500 8.500C14.600 11 14.800 12.500 14 14.500C13.200 16.200 12.900 17.500 13.500 19C14.200 20.700 15 22 14.700 23.800C14.500 25 14 25.800 13.700 26.500C15 26.300 16.400 25.400 17.400 23.200L28 23.200C28.800 24.800 29.500 26.800 30.200 28C31 29.500 31.800 30.400 32.900 30.800C32.600 29 31 27 30.600 25.200C30.300 23.800 31 22.500 31.800 21C32.800 19.300 33.200 18 32.800 16.500C32.300 14.800 31.600 13.500 31.500 12C31.300 9.800 31 8.500 30 7C28.500 4.800 26 3.600 22.600 3.600Z" fill="#fff"/>
<path d="M23.200 9.200C19.700 9.400 17.400 12.500 17.500 16.500C17.600 20.500 19.800 23.500 22.700 23.500C25.600 23.500 27.900 20.500 27.900 16.500C27.900 13.400 26.600 10.700 24.300 9.500Z" fill="#fff" stroke="#3a3a3a" stroke-width="0.650"/>
<path d="M22.500 3.800C23.300 5.500 23.700 7.500 24 9.400" fill="none" stroke="#3a3a3a" stroke-width="0.600"/>
<path d="M19.900 22.300V25C18.500 26 16.500 26.600 14.200 27.200C11.500 28 10 29.500 9.600 31C9 33.500 8.700 35.500 8.700 37C8.700 38.500 9.200 39.300 10.500 39.600C18.500 40.900 26.700 40.900 34.700 39.600C36 39.300 36.500 38.500 36.400 37C36.300 35 35.800 32.500 34.800 30.600C34 29.200 32.800 28.200 31.300 27.500C29 26.600 26.500 26 25.300 25V22.300Z" fill="#fff"/>
<path d="M29.300 26.200L32.300 31" fill="none" stroke="#555" stroke-width="0.600"/></svg>
<div class="a fr" style="left:308.5px;top:469.0px"></div>
<svg style="left:313.5px;top:472.5px" width="45" height="45" viewBox="0 0 45 45"><rect width="45" height="45" fill="#333"/><path d="M22.600 3.600C19.500 3.600 16.500 5.500 15.500 8.500C14.600 11 14.800 12.500 14 14.500C13.200 16.200 12.900 17.500 13.500 19C14.200 20.700 15 22 14.700 23.800C14.500 25 14 25.800 13.700 26.500C15 26.300 16.400 25.400 17.400 23.200L28 23.200C28.800 24.800 29.500 26.800 30.200 28C31 29.500 31.800 30.400 32.900 30.800C32.600 29 31 27 30.600 25.200C30.300 23.800 31 22.500 31.800 21C32.800 19.300 33.200 18 32.800 16.500C32.300 14.800 31.600 13.500 31.500 12C31.300 9.800 31 8.500 30 7C28.500 4.800 26 3.600 22.600 3.600Z" fill="#fff"/>
<path d="M23.200 9.200C19.700 9.400 17.400 12.500 17.500 16.500C17.600 20.500 19.800 23.500 22.700 23.500C25.600 23.500 27.900 20.500 27.900 16.500C27.900 13.400 26.600 10.700 24.300 9.500Z" fill="#fff" stroke="#3a3a3a" stroke-width="0.650"/>
<path d="M22.500 3.800C23.300 5.500 23.700 7.500 24 9.400" fill="none" stroke="#3a3a3a" stroke-width="0.600"/>
<path d="M19.900 22.300V25C18.500 26 16.500 26.600 14.200 27.200C11.500 28 10 29.500 9.600 31C9 33.500 8.700 35.500 8.700 37C8.700 38.500 9.200 39.300 10.500 39.600C18.500 40.900 26.700 40.900 34.700 39.600C36 39.300 36.500 38.500 36.400 37C36.300 35 35.800 32.500 34.800 30.600C34 29.200 32.800 28.200 31.300 27.500C29 26.600 26.500 26 25.300 25V22.300Z" fill="#fff"/>
<path d="M29.300 26.200L32.300 31" fill="none" stroke="#555" stroke-width="0.600"/></svg>
<div class="a fr" style="left:437px;top:469.0px"></div>
<svg style="left:442px;top:472.5px" width="45" height="45" viewBox="0 0 45 45"><rect width="45" height="45" fill="#333"/><path d="M22.600 3.600C19.500 3.600 16.500 5.500 15.500 8.500C14.600 11 14.800 12.500 14 14.500C13.200 16.200 12.900 17.500 13.500 19C14.200 20.700 15 22 14.700 23.800C14.500 25 14 25.800 13.700 26.500C15 26.300 16.400 25.400 17.400 23.200L28 23.200C28.800 24.800 29.500 26.800 30.200 28C31 29.500 31.800 30.400 32.900 30.800C32.600 29 31 27 30.600 25.200C30.300 23.800 31 22.500 31.800 21C32.800 19.300 33.200 18 32.800 16.500C32.300 14.800 31.600 13.500 31.500 12C31.300 9.800 31 8.500 30 7C28.500 4.800 26 3.600 22.600 3.600Z" fill="#fff"/>
<path d="M23.200 9.200C19.700 9.400 17.400 12.500 17.500 16.500C17.600 20.500 19.800 23.500 22.700 23.500C25.600 23.500 27.900 20.500 27.900 16.500C27.900 13.400 26.600 10.700 24.300 9.500Z" fill="#fff" stroke="#3a3a3a" stroke-width="0.650"/>
<path d="M22.500 3.800C23.300 5.500 23.700 7.500 24 9.400" fill="none" stroke="#3a3a3a" stroke-width="0.600"/>
<path d="M19.900 22.300V25C18.500 26 16.500 26.600 14.200 27.200C11.500 28 10 29.500 9.600 31C9 33.500 8.700 35.500 8.700 37C8.700 38.500 9.200 39.300 10.500 39.600C18.500 40.900 26.700 40.900 34.700 39.600C36 39.300 36.500 38.500 36.400 37C36.300 35 35.800 32.500 34.800 30.600C34 29.200 32.800 28.200 31.300 27.500C29 26.600 26.500 26 25.300 25V22.300Z" fill="#fff"/>
<path d="M29.300 26.200L32.300 31" fill="none" stroke="#555" stroke-width="0.600"/></svg>
<div class="a fr" style="left:504.5px;top:469.0px"></div>
<svg style="left:509.5px;top:472.5px" width="45" height="45" viewBox="0 0 45 45"><rect width="45" height="45" fill="#333"/><path d="M21.700 3.600C17.600 3.600 14.600 6.200 14.400 10.200C13.500 10.600 13.100 11.800 13.300 13.200C13.500 14.600 13.900 15.400 14.500 15.800C15.200 18.600 17 20.600 18.600 21.600C20.600 22.800 23.800 22.800 25.800 21.600C27.400 20.600 28.600 18.600 29.200 16C29.900 15.500 30.300 14.700 30.400 13.300C30.500 11.900 30.100 10.700 29.200 10.300L29.200 9.300C28.800 6 26 3.600 21.700 3.600Z" fill="#fff"/>
<path d="M15 9.500C17 10.700 19.400 10.900 21.500 10.400C24.200 9.700 26.300 8.700 27.800 7.400" fill="none" stroke="#9a9a9a" stroke-width="1"/>
<path d="M18.600 21V23C15.500 24.600 11.500 25.700 8.200 27C6.800 27.800 6.300 29 6 30.500C5.500 32.500 5.100 34.500 5.100 36C5.100 38 5.600 39 7 39.300C17 40.900 27.500 40.900 37.200 39.300C38.600 39 39.200 38 39.100 36C39 34 38.500 32 37.900 30.500C37.400 28.800 36.800 27.800 35.600 27C32.500 25.700 28.800 24.600 25.800 23V21Z" fill="#fff"/>
<path d="M19 22.300C20.800 23.300 23.600 23.300 25.400 22.300" fill="none" stroke="#c4c4c4" stroke-width="0.500"/></svg>
<div class="a fr" style="left:607px;top:469.0px"></div>
<svg style="left:612px;top:472.5px" width="45" height="45" viewBox="0 0 45 45"><rect width="45" height="45" fill="#333"/><path d="M21.700 3.600C17.600 3.600 14.600 6.200 14.400 10.200C13.500 10.600 13.100 11.800 13.300 13.200C13.500 14.600 13.900 15.400 14.500 15.800C15.200 18.600 17 20.600 18.600 21.600C20.600 22.800 23.800 22.800 25.800 21.600C27.400 20.600 28.600 18.600 29.200 16C29.900 15.500 30.300 14.700 30.400 13.300C30.500 11.900 30.100 10.700 29.200 10.300L29.200 9.300C28.800 6 26 3.600 21.700 3.600Z" fill="#fff"/>
<path d="M15 9.500C17 10.700 19.400 10.900 21.500 10.400C24.200 9.700 26.300 8.700 27.800 7.400" fill="none" stroke="#9a9a9a" stroke-width="1"/>
<path d="M18.600 21V23C15.500 24.600 11.500 25.700 8.200 27C6.800 27.800 6.300 29 6 30.500C5.500 32.500 5.100 34.500 5.100 36C5.100 38 5.600 39 7 39.300C17 40.900 27.500 40.900 37.200 39.300C38.600 39 39.200 38 39.100 36C39 34 38.500 32 37.900 30.500C37.400 28.800 36.800 27.800 35.600 27C32.500 25.700 28.800 24.600 25.800 23V21Z" fill="#fff"/>
<path d="M19 22.300C20.800 23.300 23.600 23.300 25.400 22.300" fill="none" stroke="#c4c4c4" stroke-width="0.500"/></svg>
<div class="a fr" style="left:802px;top:469.0px"></div>
<svg style="left:807px;top:472.5px" width="45" height="45" viewBox="0 0 45 45"><rect width="45" height="45" fill="#333"/><path d="M21.700 3.600C17.600 3.600 14.600 6.200 14.400 10.200C13.500 10.600 13.100 11.800 13.300 13.200C13.500 14.600 13.900 15.400 14.500 15.800C15.200 18.600 17 20.600 18.600 21.600C20.600 22.800 23.800 22.800 25.800 21.600C27.400 20.600 28.600 18.600 29.200 16C29.900 15.500 30.300 14.700 30.400 13.300C30.500 11.900 30.100 10.700 29.200 10.300L29.200 9.300C28.800 6 26 3.600 21.700 3.600Z" fill="#fff"/>
<path d="M15 9.500C17 10.700 19.400 10.900 21.500 10.400C24.200 9.700 26.300 8.700 27.800 7.400" fill="none" stroke="#9a9a9a" stroke-width="1"/>
<path d="M18.600 21V23C15.500 24.600 11.500 25.700 8.200 27C6.800 27.800 6.300 29 6 30.500C5.500 32.500 5.100 34.500 5.100 36C5.100 38 5.600 39 7 39.300C17 40.900 27.500 40.900 37.200 39.300C38.600 39 39.200 38 39.100 36C39 34 38.500 32 37.900 30.500C37.400 28.800 36.800 27.800 35.600 27C32.500 25.700 28.800 24.600 25.800 23V21Z" fill="#fff"/>
<path d="M19 22.300C20.800 23.300 23.600 23.300 25.400 22.300" fill="none" stroke="#c4c4c4" stroke-width="0.500"/></svg>
<div class="a fr" style="left:905.5px;top:469.0px"></div>
<svg style="left:910.5px;top:472.5px" width="45" height="45" viewBox="0 0 45 45"><rect width="45" height="45" fill="#333"/><path d="M21.700 3.600C17.600 3.600 14.600 6.200 14.400 10.200C13.500 10.600 13.100 11.800 13.300 13.200C13.500 14.600 13.900 15.400 14.500 15.800C15.200 18.600 17 20.600 18.600 21.600C20.600 22.800 23.800 22.800 25.800 21.600C27.400 20.600 28.600 18.600 29.200 16C29.900 15.500 30.300 14.700 30.400 13.300C30.500 11.900 30.100 10.700 29.200 10.300L29.200 9.300C28.800 6 26 3.600 21.700 3.600Z" fill="#fff"/>
<path d="M15 9.500C17 10.700 19.400 10.900 21.500 10.400C24.200 9.700 26.300 8.700 27.800 7.400" fill="none" stroke="#9a9a9a" stroke-width="1"/>
<path d="M18.600 21V23C15.500 24.600 11.500 25.700 8.200 27C6.800 27.800 6.300 29 6 30.500C5.500 32.500 5.100 34.500 5.100 36C5.100 38 5.600 39 7 39.300C17 40.900 27.500 40.900 37.200 39.300C38.600 39 39.200 38 39.100 36C39 34 38.500 32 37.900 30.500C37.400 28.800 36.800 27.800 35.600 27C32.500 25.700 28.800 24.600 25.800 23V21Z" fill="#fff"/>
<path d="M19 22.300C20.800 23.300 23.600 23.300 25.400 22.300" fill="none" stroke="#c4c4c4" stroke-width="0.500"/></svg>
<svg style="left:538.2px;top:306.8px" width="90" height="21" viewBox="0 0 90 21" fill="none" stroke="#7edc7e" stroke-width="1.700"><path d="M10.500 1H1V20H10.500"/><path d="M79.5 1H89V20H79.5"/></svg>
<span class="t " style="left:551.2px;top:307.8px;font-size:9.5px;color:#4a4a4a;letter-spacing:-0.251px;font-weight:bold;-webkit-text-stroke:0;">SAMPLE TEXT</span>
<svg style="left:238.5px;top:426.5px" width="90" height="21" viewBox="0 0 90 21" fill="none" stroke="#7edc7e" stroke-width="1.700"><path d="M10.500 1H1V20H10.500"/><path d="M79.5 1H89V20H79.5"/></svg>
<span class="t " style="left:251.5px;top:427.5px;font-size:9.5px;color:#4a4a4a;letter-spacing:-0.251px;font-weight:bold;-webkit-text-stroke:0;">SAMPLE TEXT</span>
<svg style="left:538.2px;top:426.8px" width="90" height="21" viewBox="0 0 90 21" fill="none" stroke="#7edc7e" stroke-width="1.700"><path d="M10.500 1H1V20H10.500"/><path d="M79.5 1H89V20H79.5"/></svg>
<span class="t " style="left:551.2px;top:427.8px;font-size:9.5px;color:#4a4a4a;letter-spacing:-0.251px;font-weight:bold;-webkit-text-stroke:0;">SAMPLE TEXT</span>
<svg style="left:836.7px;top:425.6px" width="90" height="21" viewBox="0 0 90 21" fill="none" stroke="#7edc7e" stroke-width="1.700"><path d="M10.500 1H1V20H10.500"/><path d="M79.5 1H89V20H79.5"/></svg>
<span class="t " style="left:849.7px;top:426.6px;font-size:9.5px;color:#4a4a4a;letter-spacing:-0.251px;font-weight:bold;-webkit-text-stroke:0;">SAMPLE TEXT</span>
<svg style="left:187.5px;top:535.5999999999999px" width="90" height="21" viewBox="0 0 90 21" fill="none" stroke="#7edc7e" stroke-width="1.700"><path d="M10.500 1H1V20H10.500"/><path d="M79.5 1H89V20H79.5"/></svg>
<span class="t " style="left:200.5px;top:536.5999999999999px;font-size:9.5px;color:#4a4a4a;letter-spacing:-0.251px;font-weight:bold;-webkit-text-stroke:0;">SAMPLE TEXT</span>
<svg style="left:291.2px;top:535.5999999999999px" width="90" height="21" viewBox="0 0 90 21" fill="none" stroke="#7edc7e" stroke-width="1.700"><path d="M10.500 1H1V20H10.500"/><path d="M79.5 1H89V20H79.5"/></svg>
<span class="t " style="left:304.2px;top:536.5999999999999px;font-size:9.5px;color:#4a4a4a;letter-spacing:-0.251px;font-weight:bold;-webkit-text-stroke:0;">SAMPLE TEXT</span>
<svg style="left:453.0px;top:536.6999999999999px" width="90" height="21" viewBox="0 0 90 21" fill="none" stroke="#7edc7e" stroke-width="1.700"><path d="M10.500 1H1V20H10.500"/><path d="M79.5 1H89V20H79.5"/></svg>
<span class="t " style="left:466px;top:537.6999999999999px;font-size:9.5px;color:#4a4a4a;letter-spacing:-0.251px;font-weight:bold;-webkit-text-stroke:0;">SAMPLE TEXT</span>
<svg style="left:589.6px;top:536.6999999999999px" width="90" height="21" viewBox="0 0 90 21" fill="none" stroke="#7edc7e" stroke-width="1.700"><path d="M10.500 1H1V20H10.500"/><path d="M79.5 1H89V20H79.5"/></svg>
<span class="t " style="left:602.6px;top:537.6999999999999px;font-size:9.5px;color:#4a4a4a;letter-spacing:-0.251px;font-weight:bold;-webkit-text-stroke:0;">SAMPLE TEXT</span>
<svg style="left:784.0px;top:535.5999999999999px" width="90" height="21" viewBox="0 0 90 21" fill="none" stroke="#7edc7e" stroke-width="1.700"><path d="M10.500 1H1V20H10.500"/><path d="M79.5 1H89V20H79.5"/></svg>
<span class="t " style="left:797px;top:536.5999999999999px;font-size:9.5px;color:#4a4a4a;letter-spacing:-0.251px;font-weight:bold;-webkit-text-stroke:0;">SAMPLE TEXT</span>
<svg style="left:887.8px;top:535.5999999999999px" width="90" height="21" viewBox="0 0 90 21" fill="none" stroke="#7edc7e" stroke-width="1.700"><path d="M10.500 1H1V20H10.500"/><path d="M79.5 1H89V20H79.5"/></svg>
<span class="t " style="left:900.8px;top:536.5999999999999px;font-size:9.5px;color:#4a4a4a;letter-spacing:-0.251px;font-weight:bold;-webkit-text-stroke:0;">SAMPLE TEXT</span>
<div class="a" style="left:1px;top:151px;width:136px;height:484px;overflow:hidden">
<div class="a" style="left:-1px;top:-151px;width:200px;height:700px">
<div class="a" style="left:25px;top:167px;width:96.500px;height:57px;background:#ef6a42"></div>
<div class="a" style="left:28px;top:170px;width:90.500px;height:51px;background:#fff"></div>
<span class="t" style="left:0px;width:21px;text-align:right;top:164px;font-size:15px;color:#d9532c">1</span>
<svg style="left:9.5px;top:185px" width="12" height="10" viewBox="0 0 12 10"><path d="M6.90 0.30L8.05 3.42L11.37 3.55L8.75 5.60L9.66 8.80L6.90 6.95L4.14 8.80L5.05 5.60L2.43 3.55L5.75 3.42z" fill="#555"/><path d="M0.900 2.700l1.100 0.600M0.600 5.800h1.200M1.400 8.300l0.900-0.700" stroke="#666" stroke-width="0.900"/></svg>
<div class="a th" style="left:27px;top:240px"></div>
<span class="t" style="left:0px;width:21px;text-align:right;top:235px;font-size:15px;color:#444">2</span>
<svg style="left:9.5px;top:256px" width="12" height="10" viewBox="0 0 12 10"><path d="M6.90 0.30L8.05 3.42L11.37 3.55L8.75 5.60L9.66 8.80L6.90 6.95L4.14 8.80L5.05 5.60L2.43 3.55L5.75 3.42z" fill="#555"/><path d="M0.900 2.700l1.100 0.600M0.600 5.800h1.200M1.400 8.300l0.900-0.700" stroke="#666" stroke-width="0.900"/></svg>
<div class="a th" style="left:27px;top:311px"></div>
<span class="t" style="left:0px;width:21px;text-align:right;top:306px;font-size:15px;color:#444">3</span>
<svg style="left:9.5px;top:327px" width="12" height="10" viewBox="0 0 12 10"><path d="M6.90 0.30L8.05 3.42L11.37 3.55L8.75 5.60L9.66 8.80L6.90 6.95L4.14 8.80L5.05 5.60L2.43 3.55L5.75 3.42z" fill="#555"/><path d="M0.900 2.700l1.100 0.600M0.600 5.800h1.200M1.400 8.300l0.900-0.700" stroke="#666" stroke-width="0.900"/></svg>
<div class="a th" style="left:27px;top:382px"></div>
<span class="t" style="left:0px;width:21px;text-align:right;top:377px;font-size:15px;color:#444">4</span>
<svg style="left:9.5px;top:398px" width="12" height="10" viewBox="0 0 12 10"><path d="M6.90 0.30L8.05 3.42L11.37 3.55L8.75 5.60L9.66 8.80L6.90 6.95L4.14 8.80L5.05 5.60L2.43 3.55L5.75 3.42z" fill="#555"/><path d="M0.900 2.700l1.100 0.600M0.600 5.800h1.200M1.400 8.300l0.900-0.700" stroke="#666" stroke-width="0.900"/></svg>
<div class="a th" style="left:27px;top:454px"></div>
<span class="t" style="left:0px;width:21px;text-align:right;top:449px;font-size:15px;color:#444">5</span>
<svg style="left:9.5px;top:470px" width="12" height="10" viewBox="0 0 12 10"><path d="M6.90 0.30L8.05 3.42L11.37 3.55L8.75 5.60L9.66 8.80L6.90 6.95L4.14 8.80L5.05 5.60L2.43 3.55L5.75 3.42z" fill="#555"/><path d="M0.900 2.700l1.100 0.600M0.600 5.800h1.200M1.400 8.300l0.900-0.700" stroke="#666" stroke-width="0.900"/></svg>
<div class="a th" style="left:27px;top:525px"></div>
<span class="t" style="left:0px;width:21px;text-align:right;top:520px;font-size:15px;color:#444">6</span>
<svg style="left:9.5px;top:541px" width="12" height="10" viewBox="0 0 12 10"><path d="M6.90 0.30L8.05 3.42L11.37 3.55L8.75 5.60L9.66 8.80L6.90 6.95L4.14 8.80L5.05 5.60L2.43 3.55L5.75 3.42z" fill="#555"/><path d="M0.900 2.700l1.100 0.600M0.600 5.800h1.200M1.400 8.300l0.900-0.700" stroke="#666" stroke-width="0.900"/></svg>
<div class="a th" style="left:27px;top:596px"></div>
<span class="t" style="left:0px;width:21px;text-align:right;top:591px;font-size:15px;color:#444">7</span>
<svg style="left:9.5px;top:612px" width="12" height="10" viewBox="0 0 12 10"><path d="M6.90 0.30L8.05 3.42L11.37 3.55L8.75 5.60L9.66 8.80L6.90 6.95L4.14 8.80L5.05 5.60L2.43 3.55L5.75 3.42z" fill="#555"/><path d="M0.900 2.700l1.100 0.600M0.600 5.800h1.200M1.400 8.300l0.900-0.700" stroke="#666" stroke-width="0.900"/></svg>
<div class="a" style="left:29px;top:171px;width:88px;height:49px;overflow:hidden"><div class="a" style="left:0;top:0;width:1024px;height:658px;transform-origin:0 0;transform:scale(0.10758) translate(-174px,-160px)"><div class="a slidebg" style="left:175px;top:161px;width:817px;height:459px;"></div>
<svg style="left:483px;top:183px" width="200" height="38" viewBox="0 0 200 38" fill="none" stroke="#7edc7e"><path d="M2 0v38" stroke-width="4"/><path d="M0 1h18.500M0 37h18.500" stroke-width="2"/><path d="M198 0v38" stroke-width="4"/><path d="M200 1h-18.500M200 37h-18.500" stroke-width="2"/></svg>
<span class="t" style="left:495.5px;top:182px;line-height:40px;height:40px;font-size:26px;font-weight:bold;color:#404040;letter-spacing:0.696px">FAMILY TREE</span>
<svg style="left:400px;top:238px" width="100" height="74" viewBox="0 0 100 74"><path d="M1.500 1.500H90.500V13.500L97.500 21.500L90.500 30.500V71.500H1.500z" fill="#a6a6a6" stroke="#3d3d3d" stroke-width="1"/></svg>
<svg style="left:660.500px;top:239px" width="100" height="74" viewBox="0 0 100 74"><path d="M97.500 1.500H8.500V13.500L1.500 21.500L8.500 30.500V71.500H97.500z" fill="#a6a6a6" stroke="#3d3d3d" stroke-width="1"/></svg>
<span class="t" style="left:385.8px;top:237.7px;width:120px;text-align:center;font-size:7px;color:#fff;letter-spacing:-0.050px">To replace with your own</span>
<span class="t" style="left:385.8px;top:252px;width:120px;text-align:center;font-size:7px;color:#fff;letter-spacing:-0.050px">image. Select image hit</span>
<span class="t" style="left:385.8px;top:266px;width:120px;text-align:center;font-size:7px;color:#fff;letter-spacing:-0.052px">‘DELETE’ key. Select</span>
<span class="t" style="left:385.8px;top:279.6px;width:120px;text-align:center;font-size:7px;color:#fff;letter-spacing:-0.053px">image icon and browser</span>
<span class="t" style="left:385.8px;top:293px;width:120px;text-align:center;font-size:7px;color:#fff;letter-spacing:-0.050px">for your image.</span>
<span class="t" style="left:653px;top:245.6px;width:120px;text-align:center;font-size:7px;color:#fff;letter-spacing:-0.056px">Resize and move image</span>
<span class="t" style="left:653px;top:259.8px;width:120px;text-align:center;font-size:7px;color:#fff;letter-spacing:-0.048px">by using the picture crop</span>
<span class="t" style="left:653px;top:273.6px;width:120px;text-align:center;font-size:7px;color:#fff;letter-spacing:-0.048px">tools in the Format</span>
<span class="t" style="left:653px;top:287.2px;width:120px;text-align:center;font-size:7px;color:#fff;letter-spacing:-0.060px">Shape pane.</span>
<div class="a" style="left:249px;top:334px;width:669px;height:3px;background:#27a127"></div>
<div class="a" style="left:249px;top:334px;width:3px;height:22px;background:#27a127"></div>
<div class="a" style="left:615px;top:334px;width:3.5px;height:23px;background:#27a127"></div>
<div class="a" style="left:914.5px;top:334px;width:3.5px;height:21.5px;background:#27a127"></div>
<div class="a" style="left:232px;top:455.5px;width:56px;height:2.6px;background:#27a127"></div>
<div class="a" style="left:287px;top:454px;width:51.5px;height:2.6px;background:#27a127"></div>
<div class="a" style="left:232px;top:455.5px;width:2.8px;height:9.0px;background:#27a127"></div>
<div class="a" style="left:335.5px;top:454px;width:2.8px;height:9.5px;background:#27a127"></div>
<div class="a" style="left:530px;top:455.5px;width:56.5px;height:2.6px;background:#27a127"></div>
<div class="a" style="left:585.5px;top:454px;width:51.5px;height:2.6px;background:#27a127"></div>
<div class="a" style="left:530px;top:455.5px;width:2.8px;height:9.0px;background:#27a127"></div>
<div class="a" style="left:634px;top:454px;width:2.8px;height:9.5px;background:#27a127"></div>
<div class="a" style="left:828.5px;top:455.5px;width:56.0px;height:2.6px;background:#27a127"></div>
<div class="a" style="left:883.5px;top:454px;width:51.200000000000045px;height:2.6px;background:#27a127"></div>
<div class="a" style="left:828.5px;top:455.5px;width:2.8px;height:9.0px;background:#27a127"></div>
<div class="a" style="left:931.7px;top:454px;width:2.8px;height:9.5px;background:#27a127"></div>
<div class="a fr" style="left:522px;top:241.0px"></div>
<svg style="left:527px;top:244.5px" width="45" height="45" viewBox="0 0 45 45"><rect width="45" height="45" fill="#333"/><path d="M22.600 3.600C19.500 3.600 16.500 5.500 15.500 8.500C14.600 11 14.800 12.500 14 14.500C13.200 16.200 12.900 17.500 13.500 19C14.200 20.700 15 22 14.700 23.800C14.500 25 14 25.800 13.700 26.500C15 26.300 16.400 25.400 17.400 23.200L28 23.200C28.800 24.800 29.500 26.800 30.200 28C31 29.500 31.800 30.400 32.900 30.800C32.600 29 31 27 30.600 25.200C30.300 23.800 31 22.500 31.800 21C32.800 19.300 33.200 18 32.800 16.500C32.300 14.800 31.600 13.500 31.500 12C31.300 9.800 31 8.500 30 7C28.500 4.800 26 3.600 22.600 3.600Z" fill="#fff"/>
<path d="M23.200 9.200C19.700 9.400 17.400 12.500 17.500 16.500C17.600 20.500 19.800 23.500 22.700 23.500C25.600 23.500 27.900 20.500 27.900 16.500C27.900 13.400 26.600 10.700 24.300 9.500Z" fill="#fff" stroke="#3a3a3a" stroke-width="0.650"/>
<path d="M22.500 3.800C23.300 5.500 23.700 7.500 24 9.400" fill="none" stroke="#3a3a3a" stroke-width="0.600"/>
<path d="M19.900 22.300V25C18.500 26 16.500 26.600 14.200 27.200C11.500 28 10 29.500 9.600 31C9 33.500 8.700 35.500 8.700 37C8.700 38.500 9.200 39.300 10.500 39.600C18.500 40.900 26.700 40.900 34.700 39.600C36 39.300 36.500 38.500 36.400 37C36.300 35 35.800 32.500 34.800 30.600C34 29.200 32.800 28.200 31.300 27.500C29 26.600 26.500 26 25.300 25V22.300Z" fill="#fff"/>
<path d="M29.300 26.200L32.300 31" fill="none" stroke="#555" stroke-width="0.600"/></svg>
<div class="a fr" style="left:589px;top:241.0px"></div>
<svg style="left:594px;top:244.5px" width="45" height="45" viewBox="0 0 45 45"><rect width="45" height="45" fill="#0f6b57"/><rect x="13.500" y="11.800" width="19" height="19" rx="0.800" fill="#e8edf2" stroke="#bfc7cf" stroke-width="0.800"/><rect x="15.500" y="13.800" width="15" height="13.500" fill="#b5d3ee"/><circle cx="26" cy="18.600" r="2" fill="#f7b08c"/><path d="M15.500 27.300l4.500-5.300l3.800 5.300zM21.500 27.300l4.700-4.500l4.300 4.500z" fill="#6f9fc8"/></svg>
<div class="a fr" style="left:221.5px;top:360.5px"></div>
<svg style="left:226.5px;top:364px" width="45" height="45" viewBox="0 0 45 45"><rect width="45" height="45" fill="#333"/><path d="M22.600 3.600C19.500 3.600 16.500 5.500 15.500 8.500C14.600 11 14.800 12.500 14 14.500C13.200 16.200 12.900 17.500 13.500 19C14.200 20.700 15 22 14.700 23.800C14.500 25 14 25.800 13.700 26.500C15 26.300 16.400 25.400 17.400 23.200L28 23.200C28.800 24.800 29.500 26.800 30.200 28C31 29.500 31.800 30.400 32.900 30.800C32.600 29 31 27 30.600 25.200C30.300 23.800 31 22.500 31.800 21C32.800 19.300 33.200 18 32.800 16.500C32.300 14.800 31.600 13.500 31.500 12C31.300 9.800 31 8.500 30 7C28.500 4.800 26 3.600 22.600 3.600Z" fill="#fff"/>
<path d="M23.200 9.200C19.700 9.400 17.400 12.500 17.500 16.500C17.600 20.500 19.800 23.500 22.700 23.500C25.600 23.500 27.900 20.500 27.900 16.500C27.900 13.400 26.600 10.700 24.300 9.500Z" fill="#fff" stroke="#3a3a3a" stroke-width="0.650"/>
<path d="M22.500 3.800C23.300 5.500 23.700 7.500 24 9.400" fill="none" stroke="#3a3a3a" stroke-width="0.600"/>
<path d="M19.900 22.300V25C18.500 26 16.500 26.600 14.200 27.200C11.500 28 10 29.500 9.600 31C9 33.500 8.700 35.500 8.700 37C8.700 38.500 9.200 39.300 10.500 39.600C18.500 40.900 26.700 40.900 34.700 39.600C36 39.300 36.500 38.500 36.400 37C36.300 35 35.800 32.500 34.800 30.600C34 29.200 32.800 28.200 31.300 27.500C29 26.600 26.500 26 25.300 25V22.300Z" fill="#fff"/>
<path d="M29.300 26.200L32.300 31" fill="none" stroke="#555" stroke-width="0.600"/></svg>
<div class="a fr" style="left:290px;top:360.5px"></div>
<svg style="left:295px;top:364px" width="45" height="45" viewBox="0 0 45 45"><rect width="45" height="45" fill="#333"/><path d="M21.700 3.600C17.600 3.600 14.600 6.200 14.400 10.200C13.500 10.600 13.100 11.800 13.300 13.200C13.500 14.600 13.900 15.400 14.500 15.800C15.200 18.600 17 20.600 18.600 21.600C20.600 22.800 23.800 22.800 25.800 21.600C27.400 20.600 28.600 18.600 29.200 16C29.900 15.500 30.300 14.700 30.400 13.300C30.500 11.900 30.100 10.700 29.200 10.300L29.200 9.300C28.800 6 26 3.600 21.700 3.600Z" fill="#fff"/>
<path d="M15 9.500C17 10.700 19.400 10.900 21.500 10.400C24.200 9.700 26.300 8.700 27.800 7.400" fill="none" stroke="#9a9a9a" stroke-width="1"/>
<path d="M18.600 21V23C15.500 24.600 11.500 25.700 8.200 27C6.800 27.800 6.300 29 6 30.500C5.500 32.500 5.100 34.500 5.100 36C5.100 38 5.600 39 7 39.300C17 40.900 27.500 40.900 37.200 39.300C38.600 39 39.200 38 39.100 36C39 34 38.500 32 37.900 30.500C37.400 28.800 36.800 27.800 35.600 27C32.500 25.700 28.800 24.600 25.800 23V21Z" fill="#fff"/>
<path d="M19 22.300C20.800 23.300 23.600 23.300 25.400 22.300" fill="none" stroke="#c4c4c4" stroke-width="0.500"/></svg>
<div class="a fr" style="left:522px;top:360.5px"></div>
<svg style="left:527px;top:364px" width="45" height="45" viewBox="0 0 45 45"><rect width="45" height="45" fill="#333"/><path d="M22.600 3.600C19.500 3.600 16.500 5.500 15.500 8.500C14.600 11 14.800 12.500 14 14.500C13.200 16.200 12.900 17.500 13.500 19C14.200 20.700 15 22 14.700 23.800C14.500 25 14 25.800 13.700 26.500C15 26.300 16.400 25.400 17.400 23.200L28 23.200C28.800 24.800 29.500 26.800 30.200 28C31 29.500 31.800 30.400 32.900 30.800C32.600 29 31 27 30.600 25.200C30.300 23.800 31 22.500 31.800 21C32.800 19.300 33.200 18 32.800 16.500C32.300 14.800 31.600 13.500 31.500 12C31.300 9.800 31 8.500 30 7C28.500 4.800 26 3.600 22.600 3.600Z" fill="#fff"/>
<path d="M23.200 9.200C19.700 9.400 17.400 12.500 17.500 16.500C17.600 20.500 19.800 23.500 22.700 23.500C25.600 23.500 27.900 20.500 27.900 16.500C27.900 13.400 26.600 10.700 24.300 9.500Z" fill="#fff" stroke="#3a3a3a" stroke-width="0.650"/>
<path d="M22.500 3.800C23.300 5.500 23.700 7.500 24 9.400" fill="none" stroke="#3a3a3a" stroke-width="0.600"/>
<path d="M19.900 22.300V25C18.500 26 16.500 26.600 14.200 27.200C11.500 28 10 29.500 9.600 31C9 33.500 8.700 35.500 8.700 37C8.700 38.500 9.200 39.300 10.500 39.600C18.500 40.900 26.700 40.900 34.700 39.600C36 39.300 36.500 38.500 36.400 37C36.300 35 35.800 32.500 34.800 30.600C34 29.200 32.800 28.200 31.300 27.500C29 26.600 26.500 26 25.300 25V22.300Z" fill="#fff"/>
<path d="M29.300 26.200L32.300 31" fill="none" stroke="#555" stroke-width="0.600"/></svg>
<div class="a fr" style="left:589px;top:360.5px"></div>
<svg style="left:594px;top:364px" width="45" height="45" viewBox="0 0 45 45"><rect width="45" height="45" fill="#333"/><path d="M21.700 3.600C17.600 3.600 14.600 6.200 14.400 10.200C13.500 10.600 13.100 11.800 13.300 13.200C13.500 14.600 13.900 15.400 14.500 15.800C15.200 18.600 17 20.600 18.600 21.600C20.600 22.800 23.800 22.800 25.800 21.600C27.400 20.600 28.600 18.600 29.200 16C29.900 15.500 30.300 14.700 30.400 13.300C30.500 11.900 30.100 10.700 29.200 10.300L29.200 9.300C28.800 6 26 3.600 21.700 3.600Z" fill="#fff"/>
<path d="M15 9.500C17 10.700 19.400 10.900 21.500 10.400C24.200 9.700 26.300 8.700 27.800 7.400" fill="none" stroke="#9a9a9a" stroke-width="1"/>
<path d="M18.600 21V23C15.500 24.600 11.500 25.700 8.200 27C6.800 27.800 6.300 29 6 30.500C5.500 32.500 5.100 34.500 5.100 36C5.100 38 5.600 39 7 39.300C17 40.900 27.500 40.900 37.200 39.300C38.600 39 39.200 38 39.100 36C39 34 38.500 32 37.900 30.500C37.400 28.800 36.800 27.800 35.600 27C32.500 25.700 28.800 24.600 25.800 23V21Z" fill="#fff"/>
<path d="M19 22.300C20.800 23.300 23.600 23.300 25.400 22.300" fill="none" stroke="#c4c4c4" stroke-width="0.500"/></svg>
<div class="a fr" style="left:820.2px;top:359.2px"></div>
<svg style="left:825.2px;top:362.7px" width="45" height="45" viewBox="0 0 45 45"><rect width="45" height="45" fill="#333"/><path d="M22.600 3.600C19.500 3.600 16.500 5.500 15.500 8.500C14.600 11 14.800 12.500 14 14.500C13.200 16.200 12.900 17.500 13.500 19C14.200 20.700 15 22 14.700 23.800C14.500 25 14 25.800 13.700 26.500C15 26.300 16.400 25.400 17.400 23.200L28 23.200C28.800 24.800 29.500 26.800 30.200 28C31 29.500 31.800 30.400 32.900 30.800C32.600 29 31 27 30.600 25.200C30.300 23.800 31 22.500 31.800 21C32.800 19.300 33.200 18 32.800 16.500C32.300 14.800 31.600 13.500 31.500 12C31.300 9.800 31 8.500 30 7C28.500 4.800 26 3.600 22.600 3.600Z" fill="#fff"/>
<path d="M23.200 9.200C19.700 9.400 17.400 12.500 17.500 16.500C17.600 20.500 19.800 23.500 22.700 23.500C25.600 23.500 27.900 20.500 27.900 16.500C27.900 13.400 26.600 10.700 24.300 9.500Z" fill="#fff" stroke="#3a3a3a" stroke-width="0.650"/>
<path d="M22.500 3.800C23.300 5.500 23.700 7.500 24 9.400" fill="none" stroke="#3a3a3a" stroke-width="0.600"/>
<path d="M19.900 22.300V25C18.500 26 16.500 26.600 14.200 27.200C11.500 28 10 29.500 9.600 31C9 33.500 8.700 35.500 8.700 37C8.700 38.500 9.200 39.300 10.500 39.600C18.500 40.900 26.700 40.900 34.700 39.600C36 39.300 36.500 38.500 36.400 37C36.300 35 35.800 32.500 34.800 30.600C34 29.200 32.800 28.200 31.300 27.500C29 26.600 26.500 26 25.300 25V22.300Z" fill="#fff"/>
<path d="M29.300 26.200L32.300 31" fill="none" stroke="#555" stroke-width="0.600"/></svg>
<div class="a fr" style="left:888.2px;top:359.2px"></div>
<svg style="left:893.2px;top:362.7px" width="45" height="45" viewBox="0 0 45 45"><rect width="45" height="45" fill="#333"/><path d="M21.700 3.600C17.600 3.600 14.600 6.200 14.400 10.200C13.500 10.600 13.100 11.800 13.300 13.200C13.500 14.600 13.900 15.400 14.500 15.800C15.200 18.600 17 20.600 18.600 21.600C20.600 22.800 23.800 22.800 25.800 21.600C27.400 20.600 28.600 18.600 29.200 16C29.900 15.500 30.300 14.700 30.400 13.300C30.500 11.900 30.100 10.700 29.200 10.300L29.200 9.300C28.800 6 26 3.600 21.700 3.600Z" fill="#fff"/>
<path d="M15 9.500C17 10.700 19.400 10.900 21.500 10.400C24.200 9.700 26.300 8.700 27.800 7.400" fill="none" stroke="#9a9a9a" stroke-width="1"/>
<path d="M18.600 21V23C15.500 24.600 11.500 25.700 8.200 27C6.800 27.800 6.300 29 6 30.500C5.500 32.500 5.100 34.500 5.100 36C5.100 38 5.600 39 7 39.300C17 40.900 27.500 40.900 37.200 39.300C38.600 39 39.200 38 39.100 36C39 34 38.500 32 37.900 30.500C37.400 28.800 36.800 27.800 35.600 27C32.500 25.700 28.800 24.600 25.800 23V21Z" fill="#fff"/>
<path d="M19 22.300C20.800 23.300 23.600 23.300 25.400 22.300" fill="none" stroke="#c4c4c4" stroke-width="0.500"/></svg>
<div class="a fr" style="left:205px;top:469.0px"></div>
<svg style="left:210px;top:472.5px" width="45" height="45" viewBox="0 0 45 45"><rect width="45" height="45" fill="#333"/><path d="M22.600 3.600C19.500 3.600 16.500 5.500 15.500 8.500C14.600 11 14.800 12.500 14 14.500C13.200 16.200 12.900 17.500 13.500 19C14.200 20.700 15 22 14.700 23.800C14.500 25 14 25.800 13.700 26.500C15 26.300 16.400 25.400 17.400 23.200L28 23.200C28.800 24.800 29.500 26.800 30.200 28C31 29.500 31.800 30.400 32.900 30.800C32.600 29 31 27 30.600 25.200C30.300 23.800 31 22.500 31.800 21C32.800 19.300 33.200 18 32.800 16.500C32.300 14.800 31.600 13.500 31.500 12C31.300 9.800 31 8.500 30 7C28.500 4.800 26 3.600 22.600 3.600Z" fill="#fff"/>
<path d="M23.200 9.200C19.700 9.400 17.400 12.500 17.500 16.500C17.600 20.500 19.800 23.500 22.700 23.500C25.600 23.500 27.900 20.500 27.900 16.500C27.900 13.400 26.600 10.700 24.300 9.500Z" fill="#fff" stroke="#3a3a3a" stroke-width="0.650"/>
<path d="M22.500 3.800C23.300 5.500 23.700 7.500 24 9.400" fill="none" stroke="#3a3a3a" stroke-width="0.600"/>
<path d="M19.900 22.300V25C18.500 26 16.500 26.600 14.200 27.200C11.500 28 10 29.500 9.600 31C9 33.500 8.700 35.500 8.700 37C8.700 38.500 9.200 39.300 10.500 39.600C18.500 40.900 26.700 40.900 34.700 39.600C36 39.300 36.500 38.500 36.400 37C36.300 35 35.800 32.500 34.800 30.600C34 29.200 32.800 28.200 31.300 27.500C29 26.600 26.500 26 25.300 25V22.300Z" fill="#fff"/>
<path d="M29.300 26.200L32.300 31" fill="none" stroke="#555" stroke-width="0.600"/></svg>
<div class="a fr" style="left:308.5px;top:469.0px"></div>
<svg style="left:313.5px;top:472.5px" width="45" height="45" viewBox="0 0 45 45"><rect width="45" height="45" fill="#333"/><path d="M22.600 3.600C19.500 3.600 16.500 5.500 15.500 8.500C14.600 11 14.800 12.500 14 14.500C13.200 16.200 12.900 17.500 13.500 19C14.200 20.700 15 22 14.700 23.800C14.500 25 14 25.800 13.700 26.500C15 26.300 16.400 25.400 17.400 23.200L28 23.200C28.800 24.800 29.500 26.800 30.200 28C31 29.500 31.800 30.400 32.900 30.800C32.600 29 31 27 30.600 25.200C30.300 23.800 31 22.500 31.800 21C32.800 19.300 33.200 18 32.800 16.500C32.300 14.800 31.600 13.500 31.500 12C31.300 9.800 31 8.500 30 7C28.500 4.800 26 3.600 22.600 3.600Z" fill="#fff"/>
<path d="M23.200 9.200C19.700 9.400 17.400 12.500 17.500 16.500C17.600 20.500 19.800 23.500 22.700 23.500C25.600 23.500 27.900 20.500 27.900 16.500C27.900 13.400 26.600 10.700 24.300 9.500Z" fill="#fff" stroke="#3a3a3a" stroke-width="0.650"/>
<path d="M22.500 3.800C23.300 5.500 23.700 7.500 24 9.400" fill="none" stroke="#3a3a3a" stroke-width="0.600"/>
<path d="M19.900 22.300V25C18.500 26 16.500 26.600 14.200 27.200C11.500 28 10 29.500 9.600 31C9 33.500 8.700 35.500 8.700 37C8.700 38.500 9.200 39.300 10.500 39.600C18.500 40.900 26.700 40.900 34.700 39.600C36 39.300 36.500 38.500 36.400 37C36.300 35 35.800 32.500 34.800 30.600C34 29.200 32.800 28.200 31.300 27.500C29 26.600 26.500 26 25.300 25V22.300Z" fill="#fff"/>
<path d="M29.300 26.200L32.300 31" fill="none" stroke="#555" stroke-width="0.600"/></svg>
<div class="a fr" style="left:437px;top:469.0px"></div>
<svg style="left:442px;top:472.5px" width="45" height="45" viewBox="0 0 45 45"><rect width="45" height="45" fill="#333"/><path d="M22.600 3.600C19.500 3.600 16.500 5.500 15.500 8.500C14.600 11 14.800 12.500 14 14.500C13.200 16.200 12.900 17.500 13.500 19C14.200 20.700 15 22 14.700 23.800C14.500 25 14 25.800 13.700 26.500C15 26.300 16.400 25.400 17.400 23.200L28 23.200C28.800 24.800 29.500 26.800 30.200 28C31 29.500 31.800 30.400 32.900 30.800C32.600 29 31 27 30.600 25.200C30.300 23.800 31 22.500 31.800 21C32.800 19.300 33.200 18 32.800 16.500C32.300 14.800 31.600 13.500 31.500 12C31.300 9.800 31 8.500 30 7C28.500 4.800 26 3.600 22.600 3.600Z" fill="#fff"/>
<path d="M23.200 9.200C19.700 9.400 17.400 12.500 17.500 16.500C17.600 20.500 19.800 23.500 22.700 23.500C25.600 23.500 27.900 20.500 27.900 16.500C27.900 13.400 26.600 10.700 24.300 9.500Z" fill="#fff" stroke="#3a3a3a" stroke-width="0.650"/>
<path d="M22.500 3.800C23.300 5.500 23.700 7.500 24 9.400" fill="none" stroke="#3a3a3a" stroke-width="0.600"/>
<path d="M19.900 22.300V25C18.500 26 16.500 26.600 14.200 27.200C11.500 28 10 29.500 9.600 31C9 33.500 8.700 35.500 8.700 37C8.700 38.500 9.200 39.300 10.500 39.600C18.500 40.900 26.700 40.900 34.700 39.600C36 39.300 36.500 38.500 36.400 37C36.300 35 35.800 32.500 34.800 30.600C34 29.200 32.800 28.200 31.300 27.500C29 26.600 26.500 26 25.300 25V22.300Z" fill="#fff"/>
<path d="M29.300 26.200L32.300 31" fill="none" stroke="#555" stroke-width="0.600"/></svg>
<div class="a fr" style="left:504.5px;top:469.0px"></div>
<svg style="left:509.5px;top:472.5px" width="45" height="45" viewBox="0 0 45 45"><rect width="45" height="45" fill="#333"/><path d="M21.700 3.600C17.600 3.600 14.600 6.200 14.400 10.200C13.500 10.600 13.100 11.800 13.300 13.200C13.500 14.600 13.900 15.400 14.500 15.800C15.200 18.600 17 20.600 18.600 21.600C20.600 22.800 23.800 22.800 25.800 21.600C27.400 20.600 28.600 18.600 29.200 16C29.900 15.500 30.300 14.700 30.400 13.300C30.500 11.900 30.100 10.700 29.200 10.300L29.200 9.300C28.800 6 26 3.600 21.700 3.600Z" fill="#fff"/>
<path d="M15 9.500C17 10.700 19.400 10.900 21.500 10.400C24.200 9.700 26.300 8.700 27.800 7.400" fill="none" stroke="#9a9a9a" stroke-width="1"/>
<path d="M18.600 21V23C15.500 24.600 11.500 25.700 8.200 27C6.800 27.800 6.300 29 6 30.500C5.500 32.500 5.100 34.500 5.100 36C5.100 38 5.600 39 7 39.300C17 40.900 27.500 40.900 37.200 39.300C38.600 39 39.200 38 39.100 36C39 34 38.500 32 37.900 30.500C37.400 28.800 36.800 27.800 35.600 27C32.500 25.700 28.800 24.600 25.800 23V21Z" fill="#fff"/>
<path d="M19 22.300C20.800 23.300 23.600 23.300 25.400 22.300" fill="none" stroke="#c4c4c4" stroke-width="0.500"/></svg>
<div class="a fr" style="left:607px;top:469.0px"></div>
<svg style="left:612px;top:472.5px" width="45" height="45" viewBox="0 0 45 45"><rect width="45" height="45" fill="#333"/><path d="M21.700 3.600C17.600 3.600 14.600 6.200 14.400 10.200C13.500 10.600 13.100 11.800 13.300 13.200C13.500 14.600 13.900 15.400 14.500 15.800C15.200 18.600 17 20.600 18.600 21.600C20.600 22.800 23.800 22.800 25.800 21.600C27.400 20.600 28.600 18.600 29.200 16C29.900 15.500 30.300 14.700 30.400 13.300C30.500 11.900 30.100 10.700 29.200 10.300L29.200 9.300C28.800 6 26 3.600 21.700 3.600Z" fill="#fff"/>
<path d="M15 9.500C17 10.700 19.400 10.900 21.500 10.400C24.200 9.700 26.300 8.700 27.800 7.400" fill="none" stroke="#9a9a9a" stroke-width="1"/>
<path d="M18.600 21V23C15.500 24.600 11.500 25.700 8.200 27C6.800 27.800 6.300 29 6 30.500C5.500 32.500 5.100 34.500 5.100 36C5.100 38 5.600 39 7 39.300C17 40.900 27.500 40.900 37.200 39.300C38.600 39 39.200 38 39.100 36C39 34 38.500 32 37.900 30.500C37.400 28.800 36.800 27.800 35.600 27C32.500 25.700 28.800 24.600 25.800 23V21Z" fill="#fff"/>
<path d="M19 22.300C20.800 23.300 23.600 23.300 25.400 22.300" fill="none" stroke="#c4c4c4" stroke-width="0.500"/></svg>
<div class="a fr" style="left:802px;top:469.0px"></div>
<svg style="left:807px;top:472.5px" width="45" height="45" viewBox="0 0 45 45"><rect width="45" height="45" fill="#333"/><path d="M21.700 3.600C17.600 3.600 14.600 6.200 14.400 10.200C13.500 10.600 13.100 11.800 13.300 13.200C13.500 14.600 13.900 15.400 14.500 15.800C15.200 18.600 17 20.600 18.600 21.600C20.600 22.800 23.800 22.800 25.800 21.600C27.400 20.600 28.600 18.600 29.200 16C29.900 15.500 30.300 14.700 30.400 13.300C30.500 11.900 30.100 10.700 29.200 10.300L29.200 9.300C28.800 6 26 3.600 21.700 3.600Z" fill="#fff"/>
<path d="M15 9.500C17 10.700 19.400 10.900 21.500 10.400C24.200 9.700 26.300 8.700 27.800 7.400" fill="none" stroke="#9a9a9a" stroke-width="1"/>
<path d="M18.600 21V23C15.500 24.600 11.500 25.700 8.200 27C6.800 27.800 6.300 29 6 30.500C5.500 32.500 5.100 34.500 5.100 36C5.100 38 5.600 39 7 39.300C17 40.900 27.500 40.900 37.200 39.300C38.600 39 39.200 38 39.100 36C39 34 38.500 32 37.900 30.500C37.400 28.800 36.800 27.800 35.600 27C32.500 25.700 28.800 24.600 25.800 23V21Z" fill="#fff"/>
<path d="M19 22.300C20.800 23.300 23.600 23.300 25.400 22.300" fill="none" stroke="#c4c4c4" stroke-width="0.500"/></svg>
<div class="a fr" style="left:905.5px;top:469.0px"></div>
<svg style="left:910.5px;top:472.5px" width="45" height="45" viewBox="0 0 45 45"><rect width="45" height="45" fill="#333"/><path d="M21.700 3.600C17.600 3.600 14.600 6.200 14.400 10.200C13.500 10.600 13.100 11.800 13.300 13.200C13.500 14.600 13.900 15.400 14.500 15.800C15.200 18.600 17 20.600 18.600 21.600C20.600 22.800 23.800 22.800 25.800 21.600C27.400 20.600 28.600 18.600 29.200 16C29.900 15.500 30.300 14.700 30.400 13.300C30.500 11.900 30.100 10.700 29.200 10.300L29.200 9.300C28.800 6 26 3.600 21.700 3.600Z" fill="#fff"/>
<path d="M15 9.500C17 10.700 19.400 10.900 21.500 10.400C24.200 9.700 26.300 8.700 27.800 7.400" fill="none" stroke="#9a9a9a" stroke-width="1"/>
<path d="M18.600 21V23C15.500 24.600 11.500 25.700 8.200 27C6.800 27.800 6.300 29 6 30.500C5.500 32.500 5.100 34.500 5.100 36C5.100 38 5.600 39 7 39.300C17 40.900 27.500 40.900 37.200 39.300C38.600 39 39.200 38 39.100 36C39 34 38.500 32 37.900 30.500C37.400 28.800 36.800 27.800 35.600 27C32.500 25.700 28.800 24.600 25.800 23V21Z" fill="#fff"/>
<path d="M19 22.300C20.800 23.300 23.600 23.300 25.400 22.300" fill="none" stroke="#c4c4c4" stroke-width="0.500"/></svg>
<svg style="left:538.2px;top:306.8px" width="90" height="21" viewBox="0 0 90 21" fill="none" stroke="#7edc7e" stroke-width="1.700"><path d="M10.500 1H1V20H10.500"/><path d="M79.5 1H89V20H79.5"/></svg>
<span class="t " style="left:551.2px;top:307.8px;font-size:9.5px;color:#4a4a4a;letter-spacing:-0.251px;font-weight:bold;-webkit-text-stroke:0;">SAMPLE TEXT</span>
<svg style="left:238.5px;top:426.5px" width="90" height="21" viewBox="0 0 90 21" fill="none" stroke="#7edc7e" stroke-width="1.700"><path d="M10.500 1H1V20H10.500"/><path d="M79.5 1H89V20H79.5"/></svg>
<span class="t " style="left:251.5px;top:427.5px;font-size:9.5px;color:#4a4a4a;letter-spacing:-0.251px;font-weight:bold;-webkit-text-stroke:0;">SAMPLE TEXT</span>
<svg style="left:538.2px;top:426.8px" width="90" height="21" viewBox="0 0 90 21" fill="none" stroke="#7edc7e" stroke-width="1.700"><path d="M10.500 1H1V20H10.500"/><path d="M79.5 1H89V20H79.5"/></svg>
<span class="t " style="left:551.2px;top:427.8px;font-size:9.5px;color:#4a4a4a;letter-spacing:-0.251px;font-weight:bold;-webkit-text-stroke:0;">SAMPLE TEXT</span>
<svg style="left:836.7px;top:425.6px" width="90" height="21" viewBox="0 0 90 21" fill="none" stroke="#7edc7e" stroke-width="1.700"><path d="M10.500 1H1V20H10.500"/><path d="M79.5 1H89V20H79.5"/></svg>
<span class="t " style="left:849.7px;top:426.6px;font-size:9.5px;color:#4a4a4a;letter-spacing:-0.251px;font-weight:bold;-webkit-text-stroke:0;">SAMPLE TEXT</span>
<svg style="left:187.5px;top:535.5999999999999px" width="90" height="21" viewBox="0 0 90 21" fill="none" stroke="#7edc7e" stroke-width="1.700"><path d="M10.500 1H1V20H10.500"/><path d="M79.5 1H89V20H79.5"/></svg>
<span class="t " style="left:200.5px;top:536.5999999999999px;font-size:9.5px;color:#4a4a4a;letter-spacing:-0.251px;font-weight:bold;-webkit-text-stroke:0;">SAMPLE TEXT</span>
<svg style="left:291.2px;top:535.5999999999999px" width="90" height="21" viewBox="0 0 90 21" fill="none" stroke="#7edc7e" stroke-width="1.700"><path d="M10.500 1H1V20H10.500"/><path d="M79.5 1H89V20H79.5"/></svg>
<span class="t " style="left:304.2px;top:536.5999999999999px;font-size:9.5px;color:#4a4a4a;letter-spacing:-0.251px;font-weight:bold;-webkit-text-stroke:0;">SAMPLE TEXT</span>
<svg style="left:453.0px;top:536.6999999999999px" width="90" height="21" viewBox="0 0 90 21" fill="none" stroke="#7edc7e" stroke-width="1.700"><path d="M10.500 1H1V20H10.500"/><path d="M79.5 1H89V20H79.5"/></svg>
<span class="t " style="left:466px;top:537.6999999999999px;font-size:9.5px;color:#4a4a4a;letter-spacing:-0.251px;font-weight:bold;-webkit-text-stroke:0;">SAMPLE TEXT</span>
<svg style="left:589.6px;top:536.6999999999999px" width="90" height="21" viewBox="0 0 90 21" fill="none" stroke="#7edc7e" stroke-width="1.700"><path d="M10.500 1H1V20H10.500"/><path d="M79.5 1H89V20H79.5"/></svg>
<span class="t " style="left:602.6px;top:537.6999999999999px;font-size:9.5px;color:#4a4a4a;letter-spacing:-0.251px;font-weight:bold;-webkit-text-stroke:0;">SAMPLE TEXT</span>
<svg style="left:784.0px;top:535.5999999999999px" width="90" height="21" viewBox="0 0 90 21" fill="none" stroke="#7edc7e" stroke-width="1.700"><path d="M10.500 1H1V20H10.500"/><path d="M79.5 1H89V20H79.5"/></svg>
<span class="t " style="left:797px;top:536.5999999999999px;font-size:9.5px;color:#4a4a4a;letter-spacing:-0.251px;font-weight:bold;-webkit-text-stroke:0;">SAMPLE TEXT</span>
<svg style="left:887.8px;top:535.5999999999999px" width="90" height="21" viewBox="0 0 90 21" fill="none" stroke="#7edc7e" stroke-width="1.700"><path d="M10.500 1H1V20H10.500"/><path d="M79.5 1H89V20H79.5"/></svg>
<span class="t " style="left:900.8px;top:536.5999999999999px;font-size:9.5px;color:#4a4a4a;letter-spacing:-0.251px;font-weight:bold;-webkit-text-stroke:0;">SAMPLE TEXT</span></div></div>
<svg style="left:29px;top:171px" width="88" height="49" viewBox="0 0 88 49"><g fill="#d4d4d4" stroke="#5a5a5a" stroke-width="0.900"><rect x="24.300" y="8.400" width="9.700" height="7.600" rx="0.500"/><rect x="53.200" y="8.500" width="9.700" height="7.600" rx="0.500"/></g><path d="M25.500 10.500h7.300M25.500 12.200h7.300M25.500 13.900h7.300M54.400 11h7.300M54.400 12.700h7.300M54.400 14.400h7.300" stroke="#9a9a9a" stroke-width="0.600"/></svg>
<svg style="left:29px;top:242px;overflow:hidden" width="88" height="49" viewBox="0 0 88 49"><rect width="88" height="49" fill="#e2e2e2"/><g stroke="#d9d9d9" stroke-width="0.400"><path d="M6 0v49"/><path d="M16 0v49"/><path d="M26 0v49"/><path d="M36 0v49"/><path d="M46 0v49"/><path d="M56 0v49"/><path d="M66 0v49"/><path d="M76 0v49"/><path d="M86 0v49"/><path d="M0 6h88"/><path d="M0 16h88"/><path d="M0 26h88"/><path d="M0 36h88"/><path d="M0 46h88"/></g><rect x="9" y="7.700" width="30" height="34" fill="#fff"/><g transform="translate(11.2 9.8) scale(0.5667)"><rect width="45" height="45" fill="#333"/><path d="M22.600 3.600C19.500 3.600 16.500 5.500 15.500 8.500C14.600 11 14.800 12.500 14 14.500C13.200 16.200 12.900 17.500 13.500 19C14.200 20.700 15 22 14.700 23.800C14.500 25 14 25.800 13.700 26.500C15 26.300 16.400 25.400 17.400 23.200L28 23.200C28.800 24.800 29.500 26.800 30.200 28C31 29.500 31.800 30.400 32.900 30.800C32.600 29 31 27 30.600 25.200C30.300 23.800 31 22.500 31.800 21C32.800 19.300 33.200 18 32.800 16.500C32.300 14.800 31.600 13.500 31.500 12C31.300 9.800 31 8.500 30 7C28.500 4.800 26 3.600 22.600 3.600Z" fill="#fff"/>
<path d="M23.200 9.200C19.700 9.400 17.400 12.500 17.500 16.500C17.600 20.500 19.800 23.500 22.700 23.500C25.600 23.500 27.900 20.500 27.900 16.500C27.900 13.400 26.600 10.700 24.300 9.500Z" fill="#fff" stroke="#3a3a3a" stroke-width="0.650"/>
<path d="M22.500 3.800C23.300 5.500 23.700 7.500 24 9.400" fill="none" stroke="#3a3a3a" stroke-width="0.600"/>
<path d="M19.900 22.300V25C18.500 26 16.500 26.600 14.200 27.200C11.500 28 10 29.500 9.600 31C9 33.500 8.700 35.500 8.700 37C8.700 38.500 9.200 39.300 10.500 39.600C18.500 40.900 26.700 40.900 34.700 39.600C36 39.300 36.500 38.500 36.400 37C36.300 35 35.800 32.500 34.800 30.600C34 29.200 32.800 28.200 31.300 27.500C29 26.600 26.500 26 25.300 25V22.300Z" fill="#fff"/>
<path d="M29.300 26.200L32.300 31" fill="none" stroke="#555" stroke-width="0.600"/></g><rect x="40.200" y="27.400" width="10.600" height="7.700" fill="#ddd" stroke="#666" stroke-width="0.800"/><rect x="40.200" y="35.900" width="10.600" height="8" fill="#ddd" stroke="#666" stroke-width="0.800"/><rect x="54" y="8.1" width="13" height="0.7" fill="#6a8a5a"/><rect x="48.5" y="12.1" width="16" height="0.6" fill="#8fb58a"/><rect x="52" y="16.6" width="14" height="0.6" fill="#c9c9c9"/><rect x="52" y="20.9" width="18" height="0.6" fill="#8aa5a0"/><rect x="59.5" y="23" width="8" height="0.6" fill="#9a9a9a"/><rect x="52.5" y="28.8" width="26" height="0.8" fill="#7d8a8a"/><rect x="59" y="30.9" width="17" height="0.5" fill="#b9a9a9"/><rect x="59" y="32.8" width="24" height="0.5" fill="#b9a9a9"/><rect x="59" y="34.7" width="23" height="0.5" fill="#b9a9a9"/><rect x="59" y="36.6" width="18" height="0.5" fill="#b9a9a9"/></svg>
<svg style="left:29px;top:313px;overflow:hidden" width="88" height="49" viewBox="0 0 88 49"><rect width="88" height="49" fill="#e2e2e2"/><g stroke="#d9d9d9" stroke-width="0.400"><path d="M6 0v49"/><path d="M16 0v49"/><path d="M26 0v49"/><path d="M36 0v49"/><path d="M46 0v49"/><path d="M56 0v49"/><path d="M66 0v49"/><path d="M76 0v49"/><path d="M86 0v49"/><path d="M0 6h88"/><path d="M0 16h88"/><path d="M0 26h88"/><path d="M0 36h88"/><path d="M0 46h88"/></g><rect x="28.5" y="2.6" width="12.500" height="13.700" fill="#fff"/><g transform="translate(29.7 3.5) scale(0.2222)"><rect width="45" height="45" fill="#333"/><path d="M21.700 3.600C17.600 3.600 14.600 6.200 14.400 10.200C13.500 10.600 13.100 11.800 13.300 13.200C13.500 14.600 13.900 15.400 14.500 15.800C15.200 18.600 17 20.600 18.600 21.600C20.600 22.800 23.800 22.800 25.800 21.600C27.400 20.600 28.600 18.600 29.200 16C29.900 15.500 30.300 14.700 30.400 13.300C30.500 11.900 30.100 10.700 29.200 10.300L29.200 9.300C28.800 6 26 3.600 21.700 3.600Z" fill="#fff"/>
<path d="M15 9.500C17 10.700 19.400 10.900 21.500 10.400C24.200 9.700 26.300 8.700 27.800 7.400" fill="none" stroke="#9a9a9a" stroke-width="1"/>
<path d="M18.600 21V23C15.500 24.600 11.500 25.700 8.200 27C6.800 27.800 6.300 29 6 30.500C5.500 32.500 5.100 34.500 5.100 36C5.100 38 5.600 39 7 39.300C17 40.900 27.500 40.900 37.200 39.300C38.600 39 39.200 38 39.100 36C39 34 38.500 32 37.900 30.500C37.400 28.800 36.800 27.800 35.600 27C32.500 25.700 28.800 24.600 25.800 23V21Z" fill="#fff"/>
<path d="M19 22.300C20.800 23.300 23.600 23.300 25.400 22.300" fill="none" stroke="#c4c4c4" stroke-width="0.500"/></g><rect x="47.2" y="2.6" width="12.500" height="13.700" fill="#fff"/><g transform="translate(48.400000000000006 3.5) scale(0.2222)"><rect width="45" height="45" fill="#333"/><path d="M21.700 3.600C17.600 3.600 14.600 6.200 14.400 10.200C13.500 10.600 13.100 11.800 13.300 13.200C13.500 14.600 13.900 15.400 14.500 15.800C15.200 18.600 17 20.600 18.600 21.600C20.600 22.800 23.800 22.800 25.800 21.600C27.400 20.600 28.600 18.600 29.200 16C29.900 15.500 30.300 14.700 30.400 13.300C30.500 11.900 30.100 10.700 29.200 10.300L29.200 9.300C28.800 6 26 3.600 21.700 3.600Z" fill="#fff"/>
<path d="M15 9.500C17 10.700 19.400 10.900 21.500 10.400C24.200 9.700 26.300 8.700 27.800 7.400" fill="none" stroke="#9a9a9a" stroke-width="1"/>
<path d="M18.600 21V23C15.500 24.600 11.500 25.700 8.200 27C6.800 27.800 6.300 29 6 30.500C5.500 32.500 5.100 34.500 5.100 36C5.100 38 5.600 39 7 39.300C17 40.900 27.500 40.900 37.200 39.300C38.600 39 39.200 38 39.100 36C39 34 38.500 32 37.900 30.500C37.400 28.800 36.800 27.800 35.600 27C32.500 25.700 28.800 24.600 25.800 23V21Z" fill="#fff"/>
<path d="M19 22.300C20.800 23.300 23.600 23.300 25.400 22.300" fill="none" stroke="#c4c4c4" stroke-width="0.500"/></g><rect x="21" y="5.1" width="6" height="0.6" fill="#8fb58a"/><rect x="23.5" y="7.6" width="3.5" height="0.6" fill="#bbb"/><rect x="23.5" y="10.1" width="3.5" height="0.6" fill="#bbb"/><rect x="19.5" y="13.1" width="8" height="0.8" fill="#777"/><rect x="61.5" y="5.1" width="6" height="0.6" fill="#8fb58a"/><rect x="61.5" y="7.6" width="3.5" height="0.6" fill="#bbb"/><rect x="61.5" y="10.1" width="4" height="0.6" fill="#bbb"/><rect x="61.5" y="13.1" width="7.5" height="0.8" fill="#777"/><rect x="28.5" y="18.7" width="12.500" height="13.700" fill="#fff"/><g transform="translate(29.7 19.599999999999998) scale(0.2222)"><rect width="45" height="45" fill="#333"/><path d="M21.700 3.600C17.600 3.600 14.600 6.200 14.400 10.200C13.500 10.600 13.100 11.800 13.300 13.200C13.500 14.600 13.900 15.400 14.500 15.800C15.200 18.600 17 20.600 18.600 21.600C20.600 22.800 23.800 22.800 25.800 21.600C27.400 20.600 28.600 18.600 29.200 16C29.900 15.500 30.300 14.700 30.400 13.300C30.500 11.900 30.100 10.700 29.200 10.300L29.200 9.300C28.800 6 26 3.600 21.700 3.600Z" fill="#fff"/>
<path d="M15 9.500C17 10.700 19.400 10.900 21.500 10.400C24.200 9.700 26.300 8.700 27.800 7.400" fill="none" stroke="#9a9a9a" stroke-width="1"/>
<path d="M18.600 21V23C15.500 24.600 11.500 25.700 8.200 27C6.800 27.800 6.300 29 6 30.500C5.500 32.500 5.100 34.500 5.100 36C5.100 38 5.600 39 7 39.300C17 40.900 27.500 40.900 37.200 39.300C38.600 39 39.200 38 39.100 36C39 34 38.500 32 37.900 30.500C37.400 28.800 36.800 27.800 35.600 27C32.500 25.700 28.800 24.600 25.800 23V21Z" fill="#fff"/>
<path d="M19 22.300C20.800 23.300 23.600 23.300 25.400 22.300" fill="none" stroke="#c4c4c4" stroke-width="0.500"/></g><rect x="47.2" y="18.7" width="12.500" height="13.700" fill="#fff"/><g transform="translate(48.400000000000006 19.599999999999998) scale(0.2222)"><rect width="45" height="45" fill="#333"/><path d="M21.700 3.600C17.600 3.600 14.600 6.200 14.400 10.200C13.500 10.600 13.100 11.800 13.300 13.200C13.500 14.600 13.900 15.400 14.500 15.800C15.200 18.600 17 20.600 18.600 21.600C20.600 22.800 23.800 22.800 25.800 21.600C27.400 20.600 28.600 18.600 29.200 16C29.900 15.500 30.300 14.700 30.400 13.300C30.500 11.900 30.100 10.700 29.200 10.300L29.200 9.300C28.800 6 26 3.600 21.700 3.600Z" fill="#fff"/>
<path d="M15 9.500C17 10.700 19.400 10.900 21.500 10.400C24.200 9.700 26.300 8.700 27.800 7.400" fill="none" stroke="#9a9a9a" stroke-width="1"/>
<path d="M18.600 21V23C15.500 24.600 11.500 25.700 8.200 27C6.800 27.800 6.300 29 6 30.500C5.500 32.500 5.100 34.500 5.100 36C5.100 38 5.600 39 7 39.300C17 40.900 27.500 40.900 37.200 39.300C38.600 39 39.200 38 39.100 36C39 34 38.500 32 37.900 30.500C37.400 28.800 36.800 27.800 35.600 27C32.500 25.700 28.800 24.600 25.800 23V21Z" fill="#fff"/>
<path d="M19 22.300C20.800 23.300 23.600 23.300 25.400 22.300" fill="none" stroke="#c4c4c4" stroke-width="0.500"/></g><rect x="21" y="21.2" width="6" height="0.6" fill="#8fb58a"/><rect x="23.5" y="23.7" width="3.5" height="0.6" fill="#bbb"/><rect x="23.5" y="26.2" width="3.5" height="0.6" fill="#bbb"/><rect x="19.5" y="29.2" width="8" height="0.8" fill="#777"/><rect x="61.5" y="21.2" width="6" height="0.6" fill="#8fb58a"/><rect x="61.5" y="23.7" width="3.5" height="0.6" fill="#bbb"/><rect x="61.5" y="26.2" width="4" height="0.6" fill="#bbb"/><rect x="61.5" y="29.2" width="7.5" height="0.8" fill="#777"/><rect x="28.5" y="34.1" width="12.500" height="13.700" fill="#fff"/><g transform="translate(29.7 35.0) scale(0.2222)"><rect width="45" height="45" fill="#333"/><path d="M21.700 3.600C17.600 3.600 14.600 6.200 14.400 10.200C13.500 10.600 13.100 11.800 13.300 13.200C13.500 14.600 13.900 15.400 14.500 15.800C15.200 18.600 17 20.600 18.600 21.600C20.600 22.800 23.800 22.800 25.800 21.600C27.400 20.600 28.600 18.600 29.200 16C29.900 15.500 30.300 14.700 30.400 13.300C30.500 11.900 30.100 10.700 29.200 10.300L29.200 9.300C28.800 6 26 3.600 21.700 3.600Z" fill="#fff"/>
<path d="M15 9.500C17 10.700 19.400 10.900 21.500 10.400C24.200 9.700 26.300 8.700 27.800 7.400" fill="none" stroke="#9a9a9a" stroke-width="1"/>
<path d="M18.600 21V23C15.500 24.600 11.500 25.700 8.200 27C6.800 27.800 6.300 29 6 30.500C5.500 32.500 5.100 34.500 5.100 36C5.100 38 5.600 39 7 39.300C17 40.900 27.500 40.900 37.200 39.300C38.600 39 39.200 38 39.100 36C39 34 38.500 32 37.900 30.500C37.400 28.800 36.800 27.800 35.600 27C32.500 25.700 28.800 24.600 25.800 23V21Z" fill="#fff"/>
<path d="M19 22.300C20.800 23.300 23.600 23.300 25.400 22.300" fill="none" stroke="#c4c4c4" stroke-width="0.500"/></g><rect x="47.2" y="34.1" width="12.500" height="13.700" fill="#fff"/><g transform="translate(48.400000000000006 35.0) scale(0.2222)"><rect width="45" height="45" fill="#333"/><path d="M21.700 3.600C17.600 3.600 14.600 6.200 14.400 10.200C13.500 10.600 13.100 11.800 13.300 13.200C13.500 14.600 13.900 15.400 14.500 15.800C15.200 18.600 17 20.600 18.600 21.600C20.600 22.800 23.800 22.800 25.800 21.600C27.400 20.600 28.600 18.600 29.200 16C29.900 15.500 30.300 14.700 30.400 13.300C30.500 11.900 30.100 10.700 29.200 10.300L29.200 9.300C28.800 6 26 3.600 21.700 3.600Z" fill="#fff"/>
<path d="M15 9.500C17 10.700 19.400 10.900 21.500 10.400C24.200 9.700 26.300 8.700 27.800 7.400" fill="none" stroke="#9a9a9a" stroke-width="1"/>
<path d="M18.600 21V23C15.500 24.600 11.500 25.700 8.200 27C6.800 27.800 6.300 29 6 30.500C5.500 32.500 5.100 34.500 5.100 36C5.100 38 5.600 39 7 39.300C17 40.900 27.500 40.900 37.200 39.300C38.600 39 39.200 38 39.100 36C39 34 38.500 32 37.900 30.500C37.400 28.800 36.800 27.800 35.600 27C32.500 25.700 28.800 24.600 25.800 23V21Z" fill="#fff"/>
<path d="M19 22.300C20.800 23.300 23.600 23.300 25.400 22.300" fill="none" stroke="#c4c4c4" stroke-width="0.500"/></g><rect x="21" y="36.6" width="6" height="0.6" fill="#8fb58a"/><rect x="23.5" y="39.1" width="3.5" height="0.6" fill="#bbb"/><rect x="23.5" y="41.6" width="3.5" height="0.6" fill="#bbb"/><rect x="19.5" y="44.6" width="8" height="0.8" fill="#777"/><rect x="61.5" y="36.6" width="6" height="0.6" fill="#8fb58a"/><rect x="61.5" y="39.1" width="3.5" height="0.6" fill="#bbb"/><rect x="61.5" y="41.6" width="4" height="0.6" fill="#bbb"/><rect x="61.5" y="44.6" width="7.5" height="0.8" fill="#777"/><rect x="74.200" y="5.400" width="10.500" height="8" fill="#ddd" stroke="#666" stroke-width="0.900"/><rect x="74.200" y="14.200" width="10.500" height="7.800" fill="#ddd" stroke="#666" stroke-width="0.900"/></svg>
<svg style="left:29px;top:384px;overflow:hidden" width="88" height="49" viewBox="0 0 88 49"><rect width="88" height="49" fill="#e2e2e2"/><g stroke="#d9d9d9" stroke-width="0.400"><path d="M6 0v49"/><path d="M16 0v49"/><path d="M26 0v49"/><path d="M36 0v49"/><path d="M46 0v49"/><path d="M56 0v49"/><path d="M66 0v49"/><path d="M76 0v49"/><path d="M86 0v49"/><path d="M0 6h88"/><path d="M0 16h88"/><path d="M0 26h88"/><path d="M0 36h88"/><path d="M0 46h88"/></g><rect x="22.5" y="5" width="45.5" height="4.600" fill="none" stroke="#72d972" stroke-width="0.900" stroke-dasharray="1.500 44.0 3 44.0 1.500"/><text x="45.25" y="8.7" font-size="3.800" font-weight="bold" fill="#3c3c3c" stroke="#3c3c3c" stroke-width="0.150" text-anchor="middle" textLength="43.0" lengthAdjust="spacingAndGlyphs" font-family="Liberation Sans, sans-serif">ONE COLUMN TEXT</text><rect x="15.5" y="13.1" width="56" height="0.5" fill="#777"/><rect x="15.5" y="16" width="58" height="0.5" fill="#777"/><rect x="15.5" y="18" width="59" height="0.5" fill="#777"/><rect x="15.5" y="19.9" width="54" height="0.5" fill="#777"/><rect x="15.5" y="22.9" width="30" height="0.5" fill="#777"/><rect x="15.5" y="26.8" width="58" height="0.5" fill="#777"/><rect x="15.5" y="29.8" width="60" height="0.5" fill="#777"/><rect x="15.5" y="31.8" width="57" height="0.5" fill="#777"/><rect x="15.5" y="33.7" width="57" height="0.5" fill="#777"/><rect x="15.5" y="35.8" width="48" height="0.5" fill="#777"/><g transform="translate(80.5 37) rotate(-8)"><rect x="-4.8" y="-4.8" width="9.6" height="11" fill="#fff"/><rect x="-4.0" y="-4.0" width="8" height="8" fill="#333"/></g><g transform="translate(86.5 42.5) rotate(12)"><rect x="-4.8" y="-4.8" width="9.6" height="11" fill="#fff"/><rect x="-4.0" y="-4.0" width="8" height="8" fill="#333"/></g><g transform="translate(76.5 45) rotate(-20)"><rect x="-5.05" y="-5.05" width="10.1" height="11.5" fill="#fff"/><rect x="-4.25" y="-4.25" width="8.5" height="8.5" fill="#333"/></g></svg>
<svg style="left:29px;top:456px;overflow:hidden" width="88" height="49" viewBox="0 0 88 49"><rect width="88" height="49" fill="#e2e2e2"/><g stroke="#d9d9d9" stroke-width="0.400"><path d="M6 0v49"/><path d="M16 0v49"/><path d="M26 0v49"/><path d="M36 0v49"/><path d="M46 0v49"/><path d="M56 0v49"/><path d="M66 0v49"/><path d="M76 0v49"/><path d="M86 0v49"/><path d="M0 6h88"/><path d="M0 16h88"/><path d="M0 26h88"/><path d="M0 36h88"/><path d="M0 46h88"/></g><rect x="20.5" y="5" width="47.5" height="4.600" fill="none" stroke="#72d972" stroke-width="0.900" stroke-dasharray="1.500 46.0 3 46.0 1.500"/><text x="44.25" y="8.7" font-size="3.800" font-weight="bold" fill="#3c3c3c" stroke="#3c3c3c" stroke-width="0.150" text-anchor="middle" textLength="45.0" lengthAdjust="spacingAndGlyphs" font-family="Liberation Sans, sans-serif">TWO COLUMN TEXT</text><rect x="12" y="13.9" width="27" height="0.6" fill="#8c8c8c"/><rect x="12" y="16.5" width="30" height="0.6" fill="#b4b4b4"/><rect x="12" y="19" width="29" height="0.6" fill="#8c8c8c"/><rect x="12" y="21.9" width="30" height="0.6" fill="#4c4c4c"/><rect x="12" y="24.9" width="27" height="0.6" fill="#6c6c6c"/><rect x="12" y="27" width="29" height="0.6" fill="#4c4c4c"/><rect x="12" y="29.9" width="29" height="0.6" fill="#8c8c8c"/><rect x="12" y="32.4" width="30" height="0.6" fill="#b4b4b4"/><rect x="12" y="34.9" width="30" height="0.6" fill="#777"/><rect x="12" y="37.9" width="28" height="0.6" fill="#4c4c4c"/><rect x="12" y="40.8" width="14" height="0.6" fill="#6c6c6c"/><rect x="48" y="13.9" width="31" height="0.6" fill="#8c8c8c"/><rect x="48" y="16.5" width="29" height="0.6" fill="#b4b4b4"/><rect x="48" y="19" width="29" height="0.6" fill="#8c8c8c"/><rect x="48" y="21.9" width="31" height="0.6" fill="#4c4c4c"/><rect x="48" y="24.9" width="29" height="0.6" fill="#6c6c6c"/><rect x="48" y="27" width="29" height="0.6" fill="#4c4c4c"/><rect x="48" y="29.9" width="29" height="0.6" fill="#8c8c8c"/><rect x="48" y="32.4" width="28" height="0.6" fill="#b4b4b4"/><rect x="48" y="34.9" width="28" height="0.6" fill="#777"/><rect x="48" y="37.9" width="29" height="0.6" fill="#4c4c4c"/><rect x="48" y="40.8" width="31" height="0.6" fill="#6c6c6c"/><rect x="48" y="43.7" width="4.5" height="0.6" fill="#999"/><g transform="translate(85 14.5) rotate(-5)"><rect x="-5.05" y="-5.05" width="10.1" height="11.5" fill="#fff"/><rect x="-4.25" y="-4.25" width="8.5" height="8.5" fill="#333"/></g><g transform="translate(88 24.5) rotate(12)"><rect x="-4.8" y="-4.8" width="9.6" height="11" fill="#fff"/><rect x="-4.0" y="-4.0" width="8" height="8" fill="#333"/></g><g transform="translate(85.5 37) rotate(-18)"><rect x="-5.05" y="-5.05" width="10.1" height="11.5" fill="#fff"/><rect x="-4.25" y="-4.25" width="8.5" height="8.5" fill="#333"/></g></svg>
<svg style="left:29px;top:527px;overflow:hidden" width="88" height="49" viewBox="0 0 88 49"><rect width="88" height="49" fill="#e2e2e2"/><g stroke="#d9d9d9" stroke-width="0.400"><path d="M6 0v49"/><path d="M16 0v49"/><path d="M26 0v49"/><path d="M36 0v49"/><path d="M46 0v49"/><path d="M56 0v49"/><path d="M66 0v49"/><path d="M76 0v49"/><path d="M86 0v49"/><path d="M0 6h88"/><path d="M0 16h88"/><path d="M0 26h88"/><path d="M0 36h88"/><path d="M0 46h88"/></g><g transform="translate(2 8) rotate(0)"><rect x="-4.8" y="-4.8" width="9.6" height="11" fill="#fff"/><rect x="-4.0" y="-4.0" width="8" height="8" fill="#333"/></g><g transform="translate(79 6) rotate(-25)"><rect x="-5.05" y="-5.05" width="10.1" height="11.5" fill="#fff"/><rect x="-4.25" y="-4.25" width="8.5" height="8.5" fill="#333"/></g><g transform="translate(88 8) rotate(5)"><rect x="-4.3" y="-4.3" width="8.6" height="10" fill="#fff"/><rect x="-3.5" y="-3.5" width="7" height="7" fill="#333"/></g><rect x="17.5" y="5.3" width="53.5" height="4.600" fill="none" stroke="#72d972" stroke-width="0.900" stroke-dasharray="1.500 52.0 3 52.0 1.500"/><text x="44.25" y="9.0" font-size="3.800" font-weight="bold" fill="#3c3c3c" stroke="#3c3c3c" stroke-width="0.150" text-anchor="middle" textLength="51.0" lengthAdjust="spacingAndGlyphs" font-family="Liberation Sans, sans-serif">THREE COLUMN TEXT</text><rect x="12" y="13.9" width="18" height="0.6" fill="#8c8c8c"/><rect x="12" y="16.5" width="17" height="0.6" fill="#b4b4b4"/><rect x="12" y="19" width="16" height="0.6" fill="#8c8c8c"/><rect x="12" y="21.9" width="19" height="0.6" fill="#4c4c4c"/><rect x="12" y="24.9" width="17" height="0.6" fill="#6c6c6c"/><rect x="12" y="27" width="19" height="0.6" fill="#4c4c4c"/><rect x="12" y="29.9" width="18" height="0.6" fill="#8c8c8c"/><rect x="12" y="32.4" width="19" height="0.6" fill="#b4b4b4"/><rect x="12" y="34.9" width="17" height="0.6" fill="#777"/><rect x="12" y="37.9" width="18" height="0.6" fill="#4c4c4c"/><rect x="12" y="40.8" width="18" height="0.6" fill="#6c6c6c"/><rect x="12" y="43.6" width="15" height="0.6" fill="#999"/><rect x="35.5" y="13.9" width="18" height="0.6" fill="#8c8c8c"/><rect x="35.5" y="16.5" width="19" height="0.6" fill="#b4b4b4"/><rect x="35.5" y="19" width="17.5" height="0.6" fill="#8c8c8c"/><rect x="35.5" y="21.9" width="17" height="0.6" fill="#4c4c4c"/><rect x="35.5" y="24.9" width="13.5" height="0.6" fill="#6c6c6c"/><rect x="35.5" y="29.9" width="17.5" height="0.6" fill="#8c8c8c"/><rect x="35.5" y="32.4" width="17" height="0.6" fill="#b4b4b4"/><rect x="35.5" y="34.9" width="17.5" height="0.6" fill="#777"/><rect x="35.5" y="37.9" width="17.5" height="0.6" fill="#4c4c4c"/><rect x="35.5" y="40.8" width="18.5" height="0.6" fill="#6c6c6c"/><rect x="35.5" y="43.6" width="18.5" height="0.6" fill="#999"/><rect x="59" y="13.9" width="15" height="0.6" fill="#8c8c8c"/><rect x="59" y="16.5" width="15" height="0.6" fill="#b4b4b4"/><rect x="59" y="19" width="19" height="0.6" fill="#8c8c8c"/><rect x="59" y="21.9" width="19" height="0.6" fill="#4c4c4c"/><rect x="59" y="24.9" width="17" height="0.6" fill="#6c6c6c"/><rect x="59" y="27" width="19" height="0.6" fill="#4c4c4c"/><rect x="59" y="29.9" width="19" height="0.6" fill="#8c8c8c"/><rect x="59" y="32.4" width="18" height="0.6" fill="#b4b4b4"/><rect x="59" y="34.9" width="19" height="0.6" fill="#777"/><rect x="59" y="37.9" width="19" height="0.6" fill="#4c4c4c"/><rect x="59" y="40.8" width="19" height="0.6" fill="#6c6c6c"/><rect x="59" y="43.6" width="16" height="0.6" fill="#999"/></svg>
<svg style="left:29px;top:598px;overflow:hidden" width="88" height="49" viewBox="0 0 88 49"><rect width="88" height="49" fill="#e2e2e2"/><g stroke="#d9d9d9" stroke-width="0.400"><path d="M6 0v49"/><path d="M16 0v49"/><path d="M26 0v49"/><path d="M36 0v49"/><path d="M46 0v49"/><path d="M56 0v49"/><path d="M66 0v49"/><path d="M76 0v49"/><path d="M86 0v49"/><path d="M0 6h88"/><path d="M0 16h88"/><path d="M0 26h88"/><path d="M0 36h88"/><path d="M0 46h88"/></g><text x="43.500" y="6.300" font-size="2.600" font-weight="bold" fill="#666" text-anchor="middle" textLength="17" lengthAdjust="spacingAndGlyphs" font-family="Liberation Sans, sans-serif">FAMILY TREE</text><path d="M33.500 3.500h-0.800v4h0.800M53.500 3.500h0.800v4h-0.800" fill="none" stroke="#8fdc8f" stroke-width="0.500"/><rect x="24.200" y="9.500" width="9.300" height="7.700" rx="0.800" fill="#ddd" stroke="#666" stroke-width="0.900"/><rect x="53" y="9.500" width="9.300" height="7.700" rx="0.800" fill="#ddd" stroke="#666" stroke-width="0.900"/><rect x="37.5" y="9.5" width="5.600" height="6.400" fill="#fff"/><rect x="38.0" y="9.9" width="4.600" height="4.600" fill="#333"/><path d="M39.3 14.5v-1.200c0-1 0.500-2.400 1-2.400s1 1.400 1 2.400v1.200z" fill="#fff"/><rect x="44.5" y="9.5" width="5.600" height="6.400" fill="#fff"/><rect x="45.0" y="9.9" width="4.600" height="4.600" fill="#333"/><path d="M46.3 14.5v-1.200c0-1 0.500-2.400 1-2.400s1 1.400 1 2.400v1.200z" fill="#fff"/><path d="M25 22v-2.300h37.300v2.300" fill="none" stroke="#6cc26c" stroke-width="0.700"/><path d="M39.500 18.300h8.500" stroke="#9fdf9f" stroke-width="0.500"/><rect x="22.2" y="22.3" width="5.600" height="6.400" fill="#fff"/><rect x="22.7" y="22.7" width="4.600" height="4.600" fill="#333"/><path d="M24.0 27.3v-1.200c0-1 0.500-2.400 1-2.400s1 1.400 1 2.400v1.200z" fill="#fff"/><rect x="29.7" y="22.3" width="5.600" height="6.400" fill="#fff"/><rect x="30.2" y="22.7" width="4.600" height="4.600" fill="#333"/><path d="M31.5 27.3v-1.200c0-1 0.500-2.400 1-2.400s1 1.400 1 2.400v1.200z" fill="#fff"/><rect x="53.5" y="22.3" width="5.600" height="6.400" fill="#fff"/><rect x="54.0" y="22.7" width="4.600" height="4.600" fill="#333"/><path d="M55.3 27.3v-1.200c0-1 0.500-2.400 1-2.400s1 1.400 1 2.400v1.200z" fill="#fff"/><rect x="60.5" y="22.3" width="5.600" height="6.400" fill="#fff"/><rect x="61.0" y="22.7" width="4.600" height="4.600" fill="#333"/><path d="M62.3 27.3v-1.200c0-1 0.500-2.400 1-2.400s1 1.400 1 2.400v1.200z" fill="#fff"/><path d="M23 30h8.500M54 30h8.500" stroke="#bbb" stroke-width="0.500"/><path d="M23.500 33.800v-1.500h10.800v1.500M54.500 33.800v-1.500h10.800v1.500" fill="none" stroke="#6cc26c" stroke-width="0.700"/><rect x="21" y="34.2" width="5.600" height="6.400" fill="#fff"/><rect x="21.5" y="34.6" width="4.600" height="4.600" fill="#333"/><path d="M22.8 39.2v-1.200c0-1 0.500-2.400 1-2.400s1 1.400 1 2.400v1.200z" fill="#fff"/><rect x="31.7" y="34.2" width="5.600" height="6.400" fill="#fff"/><rect x="32.2" y="34.6" width="4.600" height="4.600" fill="#333"/><path d="M33.5 39.2v-1.200c0-1 0.500-2.400 1-2.400s1 1.400 1 2.400v1.200z" fill="#fff"/><rect x="51.5" y="34.2" width="5.600" height="6.400" fill="#fff"/><rect x="52.0" y="34.6" width="4.600" height="4.600" fill="#333"/><path d="M53.3 39.2v-1.200c0-1 0.500-2.400 1-2.400s1 1.400 1 2.400v1.200z" fill="#fff"/><rect x="62.3" y="34.2" width="5.600" height="6.400" fill="#fff"/><rect x="62.8" y="34.6" width="4.600" height="4.600" fill="#333"/><path d="M64.1 39.2v-1.200c0-1 0.500-2.400 1-2.400s1 1.400 1 2.400v1.200z" fill="#fff"/></svg>
</div></div>
</div>
</body></html>
